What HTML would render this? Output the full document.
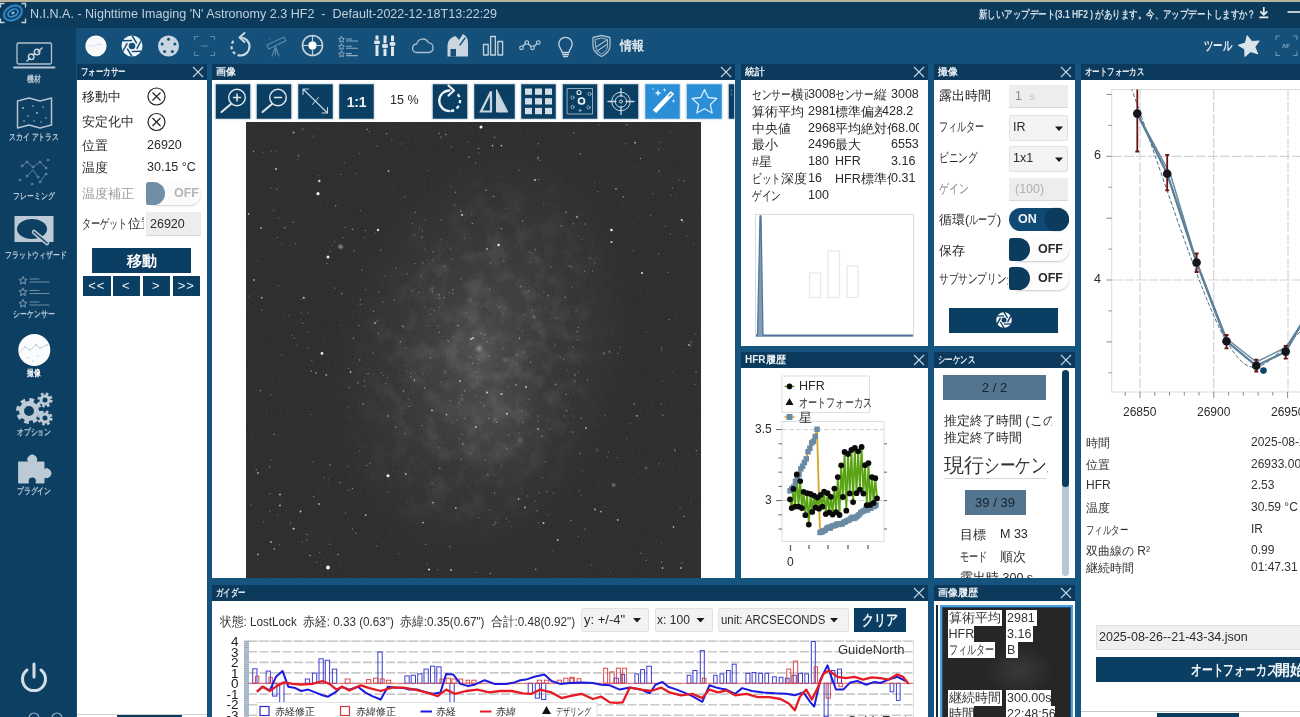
<!DOCTYPE html>
<html lang="ja">
<head>
<meta charset="utf-8">
<title>N.I.N.A.</title>
<style>
*{box-sizing:border-box;margin:0;padding:0}
html,body{width:1300px;height:717px;overflow:hidden}
body{position:relative;background:#15547f;font-family:"Liberation Sans",sans-serif;font-size:12px;color:#222}
#root{position:absolute;left:0;top:0;width:1300px;height:717px;overflow:hidden;filter:blur(0.45px);will-change:transform}
.abs{position:absolute}
#topstrip{left:0;top:0;width:1300px;height:2px;background:#b9b39c}
#titlebar{left:0;top:2px;width:1300px;height:26px;background:#0c3a5b}
#titlebar .t{position:absolute;top:4px;font-size:13px;color:#c4d3de;white-space:nowrap}
#sidebar{left:0;top:28px;width:76px;height:689px;background:#0d3f63}
#tabrow{left:76px;top:28px;width:1224px;height:36px;background:#14507a}
.panel{position:absolute;background:#fff}
.ph{position:absolute;left:0;top:0;right:0;height:16px;background:#0b3a5c;color:#e8eef3;font-weight:bold;font-size:10px;line-height:16px;padding-left:4px;white-space:nowrap;overflow:hidden}
.ph .x{position:absolute;right:3px;top:2px;width:12px;height:12px}
.sb{position:absolute;left:-4px;width:76px;transform:scaleX(.76);text-align:center;color:#b9c9d6;font-size:9px;font-weight:bold;white-space:nowrap}
.lbl{position:absolute;white-space:nowrap;font-size:12.5px;color:#2a2a2a}
.btn{position:absolute;background:#0a3e62}
.tb{position:absolute;top:19px;width:36px;height:36px;background:#0b3c5d}
.tb svg{position:absolute;left:0;top:0}
.nb{top:212px;width:27.500px;height:20px;color:#e8eef3;font-size:13px;line-height:19px;text-align:center;letter-spacing:1px}
.st{position:absolute;left:0;width:178px;height:16px;overflow:hidden;font-size:12.500px;color:#2a2a2a;white-space:nowrap}.st>span{position:absolute;top:0;background:#fff}
.dd{background:#f3f3f3;border:1px solid #e2e2e2;border-radius:2px}.tg{width:60px;height:23px;border-radius:12px;background:#fdfdfd;box-shadow:0 1px 2px rgba(0,0,0,.22)}.kn{width:21px;height:23px;border-radius:3px 12px 12px 3px;background:#0b3c5d}
.ax{top:341px;font-size:12px}.afr{position:absolute;left:5px;width:214px;font-size:12px;color:#333;white-space:nowrap;overflow:hidden;height:15px}.afr b{position:absolute;left:165px;top:0;font-weight:normal}
.k{display:inline-block;transform:scaleX(.7);transform-origin:0 50%;margin-right:calc(var(--n)*-.3em)}
.hl{position:absolute;height:16px;background:#fff;font-size:12.500px;line-height:16px;color:#333;white-space:nowrap;overflow:hidden;padding-left:1px}
.ga{position:absolute;left:0;width:26.500px;text-align:right;font-size:13.500px;line-height:15px;color:#222}.lg{top:119.500px;font-size:10px;color:#222}
</style>
</head>
<body>
<div id="root">
<div id="topstrip" class="abs"></div>
<div id="titlebar" class="abs">
  <span class="t" style="left:30px;transform-origin:0 0;transform:scaleX(.965);color:#bfd0dc">N.I.N.A. - Nighttime Imaging 'N' Astronomy 2.3 HF2&nbsp; -&nbsp; Default-2022-12-18T13:22:29</span>
  <span class="t" style="left:979px;font-size:11px;font-weight:bold;top:5px;color:#d5dfe7;transform-origin:0 0;transform:scaleX(.768)">新しいアップデート(3.1 HF2 ) があります。今、アップデートしますか？</span>
</div>
<svg class="abs" style="left:0;top:2px" width="28" height="24" viewBox="0 0 28 24" fill="none">
<g stroke="#c9d6e0" stroke-width="1.300"><path d="M.5 5.500v-4h4M21.500 1.500h4v4M25.500 16.500v4h-4M4.500 20.500h-4v-4"/></g>
<ellipse cx="13" cy="11" rx="9.500" ry="6.800" transform="rotate(-28 13 11)" stroke="#2f7fc0" stroke-width="2.400"/>
<ellipse cx="13" cy="11" rx="5.300" ry="3.300" transform="rotate(-28 13 11)" stroke="#3b8fd0" stroke-width="1.800"/>
<ellipse cx="13" cy="11" rx="1.800" ry="1.200" transform="rotate(-28 13 11)" fill="#8cc0ea"/>
</svg><div id="sidebar" class="abs"></div>
<svg class="abs" style="left:0;top:0" width="76" height="717" viewBox="0 0 76 717" fill="none" stroke="#b3c3cf" stroke-width="1.3" stroke-linecap="round" stroke-linejoin="round">
  <!-- laptop -->
  <rect x="17" y="43" width="34.5" height="21" rx="1.5"/>
  <path d="M14 67.5H54.5" stroke-width="1.8"/>
  <g stroke="#c9d5de" stroke-width="1.4"><path d="M27 61l3-3M38 52l4-4"/><circle cx="31.2" cy="56.8" r="2.8"/><circle cx="37" cy="52" r="2.8"/><path d="M33 55l2-1.6"/></g>
  <!-- map -->
  <path d="M17.5 101l11.5-3 11 3 11.5-3v27l-11.5 3-11-3-11.5 3z" stroke-width="1.5"/>
  <g fill="#b3c3cf" stroke="none"><circle cx="23" cy="108" r=".9"/><circle cx="28" cy="116" r=".8"/><circle cx="33" cy="106" r=".8"/><circle cx="37" cy="113" r=".9"/><circle cx="43" cy="107" r=".8"/><circle cx="46" cy="118" r=".8"/><circle cx="24" cy="121" r=".8"/><circle cx="34" cy="121" r=".7"/><circle cx="41" cy="122" r=".7"/></g>
  <!-- framing (dim) -->
  <g stroke="#5f7f99" stroke-width="1" fill="#5f7f99"><path d="M22 166l5-4 6 5 7-5 6 6M27 176l6-6 5 7M40 182l6-8" fill="none"/><circle cx="22" cy="166" r="1"/><circle cx="27" cy="162" r="1"/><circle cx="33" cy="167" r="1"/><circle cx="40" cy="162" r="1"/><circle cx="46" cy="168" r="1"/><circle cx="27" cy="176" r="1"/><circle cx="38" cy="177" r="1"/><circle cx="46" cy="174" r="1"/><circle cx="40" cy="182" r="1"/><circle cx="20" cy="180" r=".9"/><circle cx="32" cy="184" r=".9"/><circle cx="48" cy="160" r=".9"/></g>
  <!-- flat wizard -->
  <path d="M14.5 216h39v26h-39z" fill="#bccad5" stroke="none"/>
  <ellipse cx="32" cy="229" rx="15" ry="10" fill="#0d3f63" stroke="none"/>
  <path d="M34 232l13 11" stroke="#bccad5" stroke-width="4.5"/><path d="M34 232l13 11" stroke="#0d3f63" stroke-width="1.6"/>
  <!-- sequencer (dim) -->
  <g stroke="#6f8da4" stroke-width="1.1"><path d="M23 276.5l1.2 2.5 2.6.3-1.9 1.9.5 2.7-2.4-1.3-2.4 1.3.5-2.7-1.9-1.9 2.6-.3z"/><path d="M23 288l1.2 2.5 2.6.3-1.9 1.9.5 2.7-2.4-1.3-2.4 1.3.5-2.7-1.9-1.9 2.6-.3z"/><path d="M23 299.500l1.2 2.500 2.600.300-1.900 1.900.500 2.700-2.400-1.300-2.400 1.300.500-2.700-1.900-1.900 2.600-.300z"/><path d="M30 279h9M30 282h19M30 290.500h9M30 293.500h19M30 302h9M30 305h19" stroke-width="1.2"/></g>
  <!-- imaging (selected) -->
  <circle cx="34.300" cy="350" r="16" fill="#fbfcfd" stroke="none"/>
  <path d="M20 352l5-5 5 3 6-5 4 3 7-3" stroke="#c3cfd9" stroke-width="1"/>
  <g fill="#c3cfd9" stroke="none"><circle cx="25" cy="347" r="1"/><circle cx="30" cy="350" r="1"/><circle cx="36" cy="345" r="1"/><circle cx="40" cy="348" r="1"/><circle cx="47" cy="345" r="1"/><circle cx="28" cy="358" r=".8"/><circle cx="38" cy="356" r=".8"/><circle cx="33" cy="361" r=".8"/></g>
  <!-- gears -->
  <g stroke="#bccad5" fill="none"><circle cx="29" cy="411" r="7.500" stroke-width="5"/><circle cx="29" cy="411" r="11" stroke-width="4" stroke-dasharray="4.600 4.040" stroke-linecap="butt"/><circle cx="45" cy="400" r="4" stroke-width="3"/><circle cx="45" cy="400" r="6.300" stroke-width="2.600" stroke-dasharray="2.600 2.350" stroke-linecap="butt"/><circle cx="45" cy="418" r="4" stroke-width="3"/><circle cx="45" cy="418" r="6.300" stroke-width="2.600" stroke-dasharray="2.600 2.350" stroke-linecap="butt"/></g>
  <!-- puzzle -->
  <path d="M19 462h9.500a4.500 4.500 0 1 1 7.500 0H44v7.500a4.500 4.500 0 1 1 0 7.500V483H36a4.200 4.200 0 1 0-7.500 0H19z" fill="#bccad5" stroke="#bccad5" stroke-width="1"/>
  <!-- power -->
  <path d="M27 670a11.500 11.500 0 1 0 14 0" stroke="#d3dde5" stroke-width="3"/><path d="M34 664v13" stroke="#d3dde5" stroke-width="3"/>
  <circle cx="34" cy="718" r="5" stroke="#9fb3c2" stroke-width="1.200"/><circle cx="57" cy="718" r="5" stroke="#9fb3c2" stroke-width="1.200"/>
</svg>
<div class="sb" style="top:73px">機材</div>
<div class="sb" style="top:131px">スカイ アトラス</div>
<div class="sb" style="top:190px">フレーミング</div>
<div class="sb" style="top:249px">フラットウィザード</div>
<div class="sb" style="top:308px">シーケンサー</div>
<div class="sb" style="top:367px;color:#fff">撮像</div>
<div class="sb" style="top:426px">オプション</div>
<div class="sb" style="top:485px">プラグイン</div>

<div id="tabrow" class="abs"></div>
<svg class="abs" style="left:76px;top:28px" width="1224" height="36" viewBox="76 28 1224 36" fill="none" stroke="#c5d3dd" stroke-width="1.4" stroke-linecap="round" stroke-linejoin="round">
  <!-- imaging -->
  <circle cx="96" cy="46" r="10.600" fill="#f7f9fb" stroke="none"/>
  <path d="M88 47l3-2 3 1.500 4-2.500 4 1" stroke="#cfd8e0" stroke-width=".8"/>
  <!-- aperture -->
  <circle cx="132" cy="46" r="10.500" fill="#f3f6f9" stroke="none"/>
  <g stroke="#14507a" stroke-width="1.500" stroke-linecap="butt"><path d="M132 35.500l4.800 7.800M141.100 40.750l-4.350 8.050M141.100 51.250l-9.150 .250M132 56.500l-4.800-7.800M122.900 51.250l4.350-8.050M122.900 40.750l9.150-.250"/></g>
  <circle cx="132" cy="46" r="3.300" fill="#14507a" stroke="none"/>
  <!-- filter wheel -->
  <circle cx="168.500" cy="46" r="10.500" fill="#c9d6e0" stroke="none"/>
  <g fill="#14507a" stroke="none"><circle cx="168.500" cy="39.300" r="1.500"/><circle cx="174.900" cy="43.900" r="1.500"/><circle cx="172.400" cy="51.400" r="1.500"/><circle cx="164.600" cy="51.400" r="1.500"/><circle cx="162.100" cy="43.900" r="1.500"/></g>
  <!-- focus bracket (dim) -->
  <g stroke="#5c86a5" stroke-width="1.200"><path d="M194.500 40v-3.500h4M210.500 36.500h4v3.500M214.500 52v3.500h-4M198.500 55.500h-4v-3.500M201.500 46h6"/></g>
  <!-- rotator -->
  <path d="M240.500 37.500a9 9 0 0 1 0 18" stroke-width="2.200" stroke="#c9d6e0"/>
  <path d="M240.500 55.500a9 9 0 0 1 -6-15.700" stroke-width="2.200" stroke="#c9d6e0" stroke-dasharray="3 2.600" stroke-linecap="butt"/>
  <path d="M244.500 33l-5 4.500 5 4.500" stroke-width="2" stroke="#c9d6e0"/>
  <!-- telescope (dim) -->
  <g stroke="#5c86a5" stroke-width="1.200"><path d="M267 45l17-8 1.800 3.600-17 8.400zM275.500 47l-3.500 9M275.500 47l3.500 9M275.500 47v8"/><path d="M269 39.500l1.500-1.500" stroke-width="1"/></g>
  <!-- guider target -->
  <circle cx="312.500" cy="45.500" r="10" stroke-width="1.600"/><circle cx="312.500" cy="45.500" r="4.200" fill="#fff" stroke="none"/>
  <path d="M312.500 35.500v5M312.500 50.500v5M302.500 45.500h5M317.500 45.500h5" stroke-width="1.200"/>
  <!-- sequence list -->
  <g stroke="#8fabc0" stroke-width="1"><path d="M341.500 36.500l.9 1.900 2 .2-1.500 1.500.4 2.100-1.800-1-1.800 1 .4-2.100-1.500-1.500 2-.2zM341.500 43.800l.9 1.900 2 .2-1.500 1.500.4 2.100-1.800-1-1.800 1 .4-2.100-1.500-1.500 2-.2zM341.500 51.100l.9 1.900 2 .2-1.500 1.500.4 2.100-1.800-1-1.800 1 .4-2.100-1.500-1.500 2-.2z"/><path d="M346.500 39h5M346.500 41h11M346.500 46.300h5M346.500 48.300h11M346.500 53.600h5M346.500 55.600h11" stroke-width="1.100"/></g>
  <!-- sliders -->
  <g stroke="#dfe7ed" stroke-width="3" stroke-linecap="butt"><path d="M377 35.500v20.500M385 35.500v20.500M392.500 35.500v20.500"/></g>
  <g stroke="#14507a" stroke-width="1" stroke-linecap="butt"><path d="M374 40.200h6M374 44.500h6M382 43.700h6M382 48.300h6M389.500 41.700h6M389.500 46.200h6"/></g>
  <g stroke="#dfe7ed" stroke-width="3.300" stroke-linecap="butt"><path d="M374.200 42.350h5.600M382.200 46h5.600M389.700 43.950h5.600"/></g>
  <!-- cloud -->
  <path d="M416 52.500a4.300 4.300 0 0 1 .8-8.500 6 6 0 0 1 11.400-1.400 5 5 0 0 1 .8 9.900z" stroke-width="1.300" stroke="#a9bfcf"/>
  <!-- dome -->
  <path d="M447.500 56.500v-11a10 10 0 0 1 8-9.500l3.500 4 4-6a10 10 0 0 1 5 9v13.500z" fill="#c9d6e0" stroke="none"/>
  <path d="M450.500 49h5.500v7.500h-5.500z" fill="#14507a" stroke="none"/><path d="M460 45l5-7" stroke="#14507a" stroke-width="1.300"/>
  <!-- bar chart -->
  <path d="M483.500 44.500h4.700v10.500h-4.700zM490.700 36.500h4.700v18.500h-4.700zM497.900 41.500h4.700v13.500h-4.700z" stroke-width="1.300"/>
  <!-- polyline -->
  <path d="M521.500 47.500l5-5 6 5 6-5" stroke-width="1.200"/>
  <g fill="#14507a" stroke-width="1.100"><circle cx="521.500" cy="47.800" r="1.800"/><circle cx="526.800" cy="42.500" r="1.800"/><circle cx="532.500" cy="47.800" r="1.800"/><circle cx="538.300" cy="42.500" r="1.800"/></g>
  <!-- bulb -->
  <path d="M562 52.500c0-3-3.200-4.500-3.200-8.500a6.700 6.700 0 0 1 13.400 0c0 4-3.200 5.500-3.200 8.500zM562.500 54.500h6M563.500 56.500h4" stroke-width="1.300"/>
  <!-- shield -->
  <path d="M593 37.500l8.500-2 8.500 2v8c0 5-3.500 8.500-8.500 11-5-2.500-8.500-6-8.500-11z" stroke-width="1.300" stroke="#a9bfcf"/>
  <path d="M595.500 39.500l6-1.500 6 1.500v6c0 4-2.500 6.500-6 8.500-3.500-2-6-4.500-6-8.500z" stroke-width="1" stroke="#a9bfcf"/>
  <path d="M596 47l11-7M597 51l10-6.500" stroke-width="1.100" stroke="#a9bfcf"/>
  <!-- star -->
  <path d="M1249.500 35.500l3.200 6.600 7.300.9-5.400 5 1.400 7.200-6.500-3.600-6.500 3.600 1.400-7.200-5.400-5 7.300-.9z" fill="#dbe4eb" stroke="#dbe4eb" stroke-width="1" transform="rotate(-12 1249.5 46.5)"/>
  <!-- AF bracket -->
  <g stroke="#6f95b1" stroke-width="1.100"><path d="M1276 39.500v-3.500h3.500M1293.500 36h3.500v3.500M1297 52v3.500h-3.500M1279.500 55.500h-3.500v-3.500"/></g>
</svg>
<div class="abs" style="left:620px;top:38px;font-size:13px;font-weight:bold;color:#e4ebf0;line-height:16px;white-space:nowrap;transform-origin:0 0;transform:scaleX(.93)">情報</div>
<div class="abs" style="left:1204px;top:38px;font-size:13px;font-weight:bold;color:#e4ebf0;line-height:16px;white-space:nowrap;transform-origin:0 0;transform:scaleX(.72)">ツール</div>
<div class="abs" style="left:1282px;top:42px;font-size:6px;font-weight:bold;color:#8fabc0;line-height:8px">AF</div>
<svg class="abs" style="left:1255px;top:2px" width="45" height="24" viewBox="1255 2 45 24" fill="none" stroke="#e6edf2" stroke-width="1.700" stroke-linecap="butt"><path d="M1263.800 7v7M1260.300 11.300l3.500 3.500 3.500-3.500M1259.300 17.300h9"/><path d="M1287.500 12h12.500" stroke-width="1.600"/></svg>


<!-- PANELS -->
<div class="panel" id="p-focuser" style="left:77px;top:64px;width:130px;height:653px"><div class="abs" style="left:0;top:650px;width:130px;height:1px;background:#cfcfcf"></div>
<div class="abs" style="left:40px;top:651px;width:64.500px;height:3px;background:#0b3c5d"></div>
<div class="ph"><span class="k" style="--n:6;transform:scaleX(.74)">フォーカサー</span><svg class="x" viewBox="0 0 12 12" stroke="#c9d6e0" stroke-width="1.100"><path d="M1 1l10 10M11 1L1 11"/></svg></div>
<div class="lbl" style="left:5px;top:25px">移動中</div>
<div class="lbl" style="left:5px;top:50px">安定化中</div>
<svg class="abs" style="left:69px;top:22px" width="22" height="50" viewBox="0 0 22 50" fill="none" stroke="#222" stroke-width="1.200"><circle cx="10.500" cy="10.500" r="8.500"/><path d="M6.500 6.500l8 8M14.500 6.500l-8 8"/><circle cx="10.500" cy="36" r="8.500"/><path d="M6.500 32l8 8M14.500 32l-8 8"/></svg>
<div class="lbl" style="left:5px;top:74px">位置</div><div class="lbl" style="left:70px;top:74px">26920</div>
<div class="lbl" style="left:5px;top:96px">温度</div><div class="lbl" style="left:70px;top:96px">30.15 °C</div>
<div class="lbl" style="left:5px;top:122px;color:#9a9a9a">温度補正</div>
<div class="abs" style="left:69px;top:118px;width:55px;height:23px;border-radius:12px;background:#fbfbfb;box-shadow:0 1px 2px rgba(0,0,0,.18)"></div>
<div class="abs" style="left:69px;top:118px;width:19px;height:23px;border-radius:3px 12px 12px 3px;background:#6f8fa8"></div>
<div class="lbl" style="left:97px;top:122px;color:#b5b5b5;font-weight:bold;font-size:12.500px">OFF</div>
<div class="lbl" style="left:5px;top:152px;width:62px;overflow:hidden"><span class="k" style="--n:5">ターゲット</span>位置</div>
<div class="abs" style="left:69px;top:148px;width:55px;height:24px;background:#ededed;border-bottom:1px solid #d5d5d5"></div>
<div class="lbl" style="left:73px;top:153px">26920</div>
<div class="btn" style="left:15px;top:184px;width:99px;height:25px;color:#fff;font-weight:bold;font-size:15px;text-align:center;line-height:25px">移動</div>
<div class="btn nb" style="left:6px">&lt;&lt;</div><div class="btn nb" style="left:35.500px">&lt;</div><div class="btn nb" style="left:65.500px">&gt;</div><div class="btn nb" style="left:95.500px">&gt;&gt;</div>
</div>
<div class="panel" id="p-image" style="left:212px;top:64px;width:523px;height:514px"><div class="ph">画像<svg class="x" viewBox="0 0 12 12" stroke="#c9d6e0" stroke-width="1.100"><path d="M1 1l10 10M11 1L1 11"/></svg></div>
<svg class="abs" style="left:34px;top:58px" width="455" height="456" viewBox="0 0 455 456">
<defs>
<radialGradient id="g1"><stop offset="0" stop-color="#fff" stop-opacity=".075"/><stop offset=".5" stop-color="#fff" stop-opacity=".045"/><stop offset="1" stop-color="#fff" stop-opacity="0"/></radialGradient>
<radialGradient id="g2"><stop offset="0" stop-color="#fff" stop-opacity=".055"/><stop offset="1" stop-color="#fff" stop-opacity="0"/></radialGradient>
<radialGradient id="gf"><stop offset="0" stop-color="#fff" stop-opacity="1"/><stop offset=".4" stop-color="#fff" stop-opacity=".5"/><stop offset="1" stop-color="#fff" stop-opacity="0"/></radialGradient>
<filter id="nz" x="0" y="0" width="100%" height="100%"><feTurbulence type="fractalNoise" baseFrequency=".9" numOctaves="2" seed="3"/><feColorMatrix values="0 0 0 0 1  0 0 0 0 1  0 0 0 0 1  .5 .5 0 0 -.42"/></filter>
<filter id="b1"><feGaussianBlur stdDeviation=".7"/></filter>
<filter id="cl" x="0" y="0" width="100%" height="100%"><feTurbulence type="fractalNoise" baseFrequency=".05" numOctaves="4" seed="21"/><feColorMatrix values="0 0 0 0 1  0 0 0 0 1  0 0 0 0 1  2.8 0 0 0 -1.15"/></filter>
<radialGradient id="gm1"><stop offset="0" stop-color="#fff"/><stop offset=".55" stop-color="#fff" stop-opacity=".7"/><stop offset="1" stop-color="#fff" stop-opacity="0"/></radialGradient>
<mask id="gm"><ellipse cx="238" cy="236" rx="135" ry="205" fill="url(#gm1)" transform="rotate(16 238 236)"/></mask>
</defs>
<rect width="455" height="456" fill="#2d2d2d"/>
<ellipse cx="236" cy="232" rx="150" ry="215" fill="url(#g1)" transform="rotate(14 236 232)"/>
<ellipse cx="232" cy="226" rx="80" ry="120" fill="url(#g2)" transform="rotate(18 232 226)"/>
<ellipse cx="252" cy="300" rx="60" ry="70" fill="url(#g2)"/>
<ellipse cx="234" cy="228" rx="34" ry="30" fill="url(#g2)"/>
<g mask="url(#gm)"><rect width="455" height="456" filter="url(#cl)" opacity=".1"/></g>
<rect width="455" height="456" filter="url(#nz)" opacity=".15"/>
<g fill="#fff" filter="url(#b1)"><circle cx="148.0" cy="70.0" r="0.55" opacity="0.24"/><circle cx="243.7" cy="166.9" r="0.55" opacity="0.47"/><circle cx="98.8" cy="40.8" r="0.7" opacity="0.24"/><circle cx="42.9" cy="193.5" r="0.8" opacity="0.25"/><circle cx="102.7" cy="285.0" r="0.55" opacity="0.38"/><circle cx="180.9" cy="442.3" r="0.55" opacity="0.38"/><circle cx="62.1" cy="191.0" r="0.8" opacity="0.25"/><circle cx="141.1" cy="370.1" r="0.6" opacity="0.25"/><circle cx="259.6" cy="86.7" r="0.55" opacity="0.37"/><circle cx="30.3" cy="28.9" r="0.6" opacity="0.36"/><circle cx="241.8" cy="352.5" r="0.7" opacity="0.38"/><circle cx="206.4" cy="137.2" r="0.6" opacity="0.42"/><circle cx="112.1" cy="261.1" r="0.8" opacity="0.36"/><circle cx="156.9" cy="204.4" r="0.8" opacity="0.49"/><circle cx="55.2" cy="190.6" r="0.7" opacity="0.26"/><circle cx="222.5" cy="19.7" r="0.55" opacity="0.43"/><circle cx="260.4" cy="396.8" r="0.7" opacity="0.32"/><circle cx="159.9" cy="226.0" r="0.7" opacity="0.24"/><circle cx="44.2" cy="123.7" r="0.55" opacity="0.24"/><circle cx="318.4" cy="293.9" r="0.7" opacity="0.30"/><circle cx="176.0" cy="303.6" r="0.55" opacity="0.48"/><circle cx="162.3" cy="277.5" r="0.7" opacity="0.24"/><circle cx="348.5" cy="60.3" r="0.6" opacity="0.33"/><circle cx="415.5" cy="225.9" r="0.6" opacity="0.35"/><circle cx="249.8" cy="400.4" r="0.7" opacity="0.46"/><circle cx="127.6" cy="189.3" r="0.7" opacity="0.41"/><circle cx="173.6" cy="106.1" r="0.55" opacity="0.27"/><circle cx="106.6" cy="107.2" r="0.7" opacity="0.45"/><circle cx="84.2" cy="129.2" r="0.6" opacity="0.34"/><circle cx="168.5" cy="257.4" r="0.6" opacity="0.41"/><circle cx="234.5" cy="280.5" r="0.55" opacity="0.35"/><circle cx="394.8" cy="431.3" r="0.8" opacity="0.33"/><circle cx="181.9" cy="48.7" r="0.7" opacity="0.24"/><circle cx="32.4" cy="96.2" r="0.6" opacity="0.25"/><circle cx="272.9" cy="48.2" r="0.8" opacity="0.26"/><circle cx="47.8" cy="166.0" r="0.55" opacity="0.24"/><circle cx="95.8" cy="171.7" r="0.7" opacity="0.49"/><circle cx="273.6" cy="215.8" r="0.55" opacity="0.46"/><circle cx="449.9" cy="212.2" r="0.7" opacity="0.31"/><circle cx="67.0" cy="340.1" r="0.7" opacity="0.35"/><circle cx="314.1" cy="234.9" r="0.6" opacity="0.49"/><circle cx="240.2" cy="68.1" r="0.8" opacity="0.48"/><circle cx="343.9" cy="136.4" r="0.55" opacity="0.41"/><circle cx="119.8" cy="167.4" r="0.6" opacity="0.32"/><circle cx="102.5" cy="246.2" r="0.8" opacity="0.31"/><circle cx="102.6" cy="368.0" r="0.6" opacity="0.45"/><circle cx="371.1" cy="335.7" r="0.6" opacity="0.28"/><circle cx="224.2" cy="331.7" r="0.55" opacity="0.44"/><circle cx="215.0" cy="89.3" r="0.8" opacity="0.49"/><circle cx="203.7" cy="424.6" r="0.7" opacity="0.49"/><circle cx="166.5" cy="101.4" r="0.6" opacity="0.35"/><circle cx="154.3" cy="219.7" r="0.8" opacity="0.46"/><circle cx="218.2" cy="296.5" r="0.55" opacity="0.45"/><circle cx="56.1" cy="177.2" r="0.6" opacity="0.35"/><circle cx="82.5" cy="357.9" r="0.7" opacity="0.24"/><circle cx="428.7" cy="327.5" r="0.7" opacity="0.33"/><circle cx="429.0" cy="328.9" r="0.6" opacity="0.50"/><circle cx="14.4" cy="268.5" r="0.7" opacity="0.45"/><circle cx="67.9" cy="374.8" r="0.7" opacity="0.40"/><circle cx="160.0" cy="249.4" r="0.6" opacity="0.23"/><circle cx="362.5" cy="329.6" r="0.55" opacity="0.37"/><circle cx="423.1" cy="197.6" r="0.6" opacity="0.45"/><circle cx="97.2" cy="115.6" r="0.7" opacity="0.36"/><circle cx="346.4" cy="149.0" r="0.8" opacity="0.34"/><circle cx="61.1" cy="412.4" r="0.7" opacity="0.47"/><circle cx="300.8" cy="369.6" r="0.8" opacity="0.34"/><circle cx="415.9" cy="228.2" r="0.8" opacity="0.26"/><circle cx="232.3" cy="395.6" r="0.6" opacity="0.39"/><circle cx="352.0" cy="69.6" r="0.6" opacity="0.35"/><circle cx="329.1" cy="253.0" r="0.7" opacity="0.41"/><circle cx="241.4" cy="219.6" r="0.55" opacity="0.47"/><circle cx="27.6" cy="88.3" r="0.55" opacity="0.44"/><circle cx="231.0" cy="255.3" r="0.55" opacity="0.34"/><circle cx="278.3" cy="230.0" r="0.8" opacity="0.28"/><circle cx="127.0" cy="231.2" r="0.7" opacity="0.36"/><circle cx="113.7" cy="238.0" r="0.7" opacity="0.48"/><circle cx="404.6" cy="93.4" r="0.7" opacity="0.26"/><circle cx="56.9" cy="201.4" r="0.55" opacity="0.41"/><circle cx="195.2" cy="97.9" r="0.7" opacity="0.44"/><circle cx="406.6" cy="71.7" r="0.7" opacity="0.26"/><circle cx="400.2" cy="438.4" r="0.6" opacity="0.43"/><circle cx="44.5" cy="401.1" r="0.6" opacity="0.50"/><circle cx="377.4" cy="74.8" r="0.7" opacity="0.50"/><circle cx="184.1" cy="192.0" r="0.7" opacity="0.31"/><circle cx="327.7" cy="10.8" r="0.8" opacity="0.35"/><circle cx="319.1" cy="175.3" r="0.8" opacity="0.39"/><circle cx="233.0" cy="31.0" r="0.6" opacity="0.49"/><circle cx="49.3" cy="121.8" r="0.55" opacity="0.47"/><circle cx="83.9" cy="342.9" r="0.7" opacity="0.46"/><circle cx="306.9" cy="428.6" r="0.7" opacity="0.26"/><circle cx="416.5" cy="259.3" r="0.7" opacity="0.25"/><circle cx="27.9" cy="312.4" r="0.7" opacity="0.47"/><circle cx="123.3" cy="9.6" r="0.55" opacity="0.44"/><circle cx="39.8" cy="388.2" r="0.55" opacity="0.29"/><circle cx="56.9" cy="7.2" r="0.8" opacity="0.34"/><circle cx="414.9" cy="282.4" r="0.55" opacity="0.37"/><circle cx="109.5" cy="51.4" r="0.6" opacity="0.29"/><circle cx="83.7" cy="422.4" r="0.7" opacity="0.37"/><circle cx="94.8" cy="203.0" r="0.6" opacity="0.30"/><circle cx="364.5" cy="450.5" r="0.55" opacity="0.22"/><circle cx="332.6" cy="250.5" r="0.6" opacity="0.36"/><circle cx="112.8" cy="203.6" r="0.7" opacity="0.40"/><circle cx="248.2" cy="402.8" r="0.8" opacity="0.31"/><circle cx="99.0" cy="105.5" r="0.6" opacity="0.45"/><circle cx="320.7" cy="288.8" r="0.7" opacity="0.50"/><circle cx="444.8" cy="379.5" r="0.55" opacity="0.24"/><circle cx="336.1" cy="117.3" r="0.6" opacity="0.24"/><circle cx="302.0" cy="173.8" r="0.8" opacity="0.41"/><circle cx="129.2" cy="111.2" r="0.7" opacity="0.23"/><circle cx="85.6" cy="123.3" r="0.55" opacity="0.29"/><circle cx="435.8" cy="440.7" r="0.8" opacity="0.31"/><circle cx="17.5" cy="400.0" r="0.6" opacity="0.32"/><circle cx="2.5" cy="174.1" r="0.7" opacity="0.30"/><circle cx="297.9" cy="113.9" r="0.55" opacity="0.25"/><circle cx="370.5" cy="66.9" r="0.8" opacity="0.23"/><circle cx="12.1" cy="139.2" r="0.6" opacity="0.24"/><circle cx="433.9" cy="386.8" r="0.6" opacity="0.40"/><circle cx="324.9" cy="398.5" r="0.7" opacity="0.43"/><circle cx="327.0" cy="224.9" r="0.7" opacity="0.42"/><circle cx="292.1" cy="21.7" r="0.8" opacity="0.40"/><circle cx="333.0" cy="368.3" r="0.6" opacity="0.47"/><circle cx="341.5" cy="258.4" r="0.55" opacity="0.45"/><circle cx="265.4" cy="404.7" r="0.6" opacity="0.24"/><circle cx="20.9" cy="289.3" r="0.55" opacity="0.33"/><circle cx="205.6" cy="24.9" r="0.55" opacity="0.40"/><circle cx="309.0" cy="222.7" r="0.55" opacity="0.35"/><circle cx="33.6" cy="422.6" r="0.8" opacity="0.25"/><circle cx="239.2" cy="338.3" r="0.7" opacity="0.29"/><circle cx="35.6" cy="121.8" r="0.6" opacity="0.28"/><circle cx="295.1" cy="209.6" r="0.7" opacity="0.24"/><circle cx="412.6" cy="131.6" r="0.55" opacity="0.39"/><circle cx="291.9" cy="36.9" r="0.6" opacity="0.31"/><circle cx="295.8" cy="314.5" r="0.8" opacity="0.38"/><circle cx="7.6" cy="29.4" r="0.7" opacity="0.49"/><circle cx="46.9" cy="100.2" r="0.7" opacity="0.30"/><circle cx="235.0" cy="211.6" r="0.7" opacity="0.43"/><circle cx="450.0" cy="249.6" r="0.7" opacity="0.49"/><circle cx="424.3" cy="9.9" r="0.7" opacity="0.24"/><circle cx="230.5" cy="450.6" r="0.7" opacity="0.33"/><circle cx="415.4" cy="421.7" r="0.55" opacity="0.38"/><circle cx="65.9" cy="238.4" r="0.7" opacity="0.26"/><circle cx="371.9" cy="231.4" r="0.55" opacity="0.42"/><circle cx="106.4" cy="406.9" r="0.7" opacity="0.33"/><circle cx="73.7" cy="430.4" r="0.7" opacity="0.33"/><circle cx="330.0" cy="189.7" r="0.7" opacity="0.31"/><circle cx="380.9" cy="2.8" r="0.7" opacity="0.45"/><circle cx="56.1" cy="419.8" r="0.55" opacity="0.47"/><circle cx="132.7" cy="169.9" r="0.7" opacity="0.33"/><circle cx="394.4" cy="36.5" r="0.7" opacity="0.43"/><circle cx="387.3" cy="128.6" r="0.55" opacity="0.45"/><circle cx="130.8" cy="424.0" r="0.6" opacity="0.49"/><circle cx="198.7" cy="144.3" r="0.7" opacity="0.44"/><circle cx="194.9" cy="15.1" r="0.7" opacity="0.48"/><circle cx="426.3" cy="249.7" r="0.55" opacity="0.23"/><circle cx="332.3" cy="205.3" r="0.6" opacity="0.40"/><circle cx="131.1" cy="24.1" r="0.8" opacity="0.26"/><circle cx="215.0" cy="157.0" r="0.7" opacity="0.29"/><circle cx="335.2" cy="296.4" r="0.7" opacity="0.40"/><circle cx="137.7" cy="253.4" r="0.7" opacity="0.25"/><circle cx="292.1" cy="35.9" r="0.8" opacity="0.47"/><circle cx="226.2" cy="101.2" r="0.7" opacity="0.50"/><circle cx="204.9" cy="65.0" r="0.6" opacity="0.29"/><circle cx="80.8" cy="252.7" r="0.7" opacity="0.29"/><circle cx="118.5" cy="258.9" r="0.55" opacity="0.43"/><circle cx="188.2" cy="188.7" r="0.8" opacity="0.28"/><circle cx="123.9" cy="341.2" r="0.7" opacity="0.30"/><circle cx="438.4" cy="58.8" r="0.8" opacity="0.37"/><circle cx="358.4" cy="384.7" r="0.55" opacity="0.30"/><circle cx="114.1" cy="182.3" r="0.7" opacity="0.34"/><circle cx="142.7" cy="369.3" r="0.55" opacity="0.26"/><circle cx="193.8" cy="346.4" r="0.7" opacity="0.49"/><circle cx="222.9" cy="35.0" r="0.8" opacity="0.46"/><circle cx="440.5" cy="114.1" r="0.55" opacity="0.28"/><circle cx="70.6" cy="440.3" r="0.55" opacity="0.48"/><circle cx="327.5" cy="294.0" r="0.7" opacity="0.24"/><circle cx="352.4" cy="2.6" r="0.6" opacity="0.29"/><circle cx="416.9" cy="293.1" r="0.7" opacity="0.49"/><circle cx="284.5" cy="240.2" r="0.7" opacity="0.42"/><circle cx="52.6" cy="33.7" r="0.8" opacity="0.48"/><circle cx="88.5" cy="119.7" r="0.8" opacity="0.22"/><circle cx="244.4" cy="451.4" r="0.7" opacity="0.49"/><circle cx="292.7" cy="400.6" r="0.7" opacity="0.37"/><circle cx="248.7" cy="15.2" r="0.7" opacity="0.42"/><circle cx="140.6" cy="11.8" r="0.7" opacity="0.47"/><circle cx="293.9" cy="38.6" r="0.6" opacity="0.41"/><circle cx="419.2" cy="104.3" r="0.55" opacity="0.41"/><circle cx="326.0" cy="165.4" r="0.7" opacity="0.28"/><circle cx="361.5" cy="335.3" r="0.8" opacity="0.24"/><circle cx="225.6" cy="92.4" r="0.6" opacity="0.28"/><circle cx="101.9" cy="345.0" r="0.7" opacity="0.25"/><circle cx="283.2" cy="277.2" r="0.6" opacity="0.36"/><circle cx="412.6" cy="27.4" r="0.8" opacity="0.26"/><circle cx="179.5" cy="98.0" r="0.8" opacity="0.26"/><circle cx="25.4" cy="29.1" r="0.7" opacity="0.35"/><circle cx="323.1" cy="143.7" r="0.55" opacity="0.50"/><circle cx="422.1" cy="150.5" r="0.6" opacity="0.40"/><circle cx="238.7" cy="212.9" r="0.7" opacity="0.41"/><circle cx="172.8" cy="170.6" r="0.7" opacity="0.34"/><circle cx="51.1" cy="37.3" r="0.55" opacity="0.32"/><circle cx="432.9" cy="57.8" r="0.6" opacity="0.33"/><circle cx="348.7" cy="141.2" r="0.7" opacity="0.24"/><circle cx="320.1" cy="90.3" r="0.8" opacity="0.48"/><circle cx="89.1" cy="166.3" r="0.7" opacity="0.23"/><circle cx="187.3" cy="368.1" r="0.7" opacity="0.23"/><circle cx="17.7" cy="30.2" r="0.55" opacity="0.29"/><circle cx="339.0" cy="407.2" r="0.7" opacity="0.32"/><circle cx="153.1" cy="432.1" r="0.55" opacity="0.29"/><circle cx="325.2" cy="144.7" r="0.7" opacity="0.30"/><circle cx="327.4" cy="270.6" r="0.55" opacity="0.23"/><circle cx="107.5" cy="216.3" r="0.7" opacity="0.49"/><circle cx="176.3" cy="115.2" r="0.7" opacity="0.45"/><circle cx="61.9" cy="225.9" r="0.55" opacity="0.44"/><circle cx="335.1" cy="373.1" r="0.6" opacity="0.39"/><circle cx="149.8" cy="146.1" r="0.7" opacity="0.44"/><circle cx="270.7" cy="232.9" r="0.7" opacity="0.43"/><circle cx="113.5" cy="31.2" r="0.55" opacity="0.35"/><circle cx="247.6" cy="74.5" r="0.7" opacity="0.47"/><circle cx="447.5" cy="121.5" r="0.55" opacity="0.28"/><circle cx="191.9" cy="447.8" r="0.7" opacity="0.27"/><circle cx="62.0" cy="209.9" r="0.6" opacity="0.43"/><circle cx="384.0" cy="301.7" r="0.55" opacity="0.44"/><circle cx="134.6" cy="128.0" r="0.7" opacity="0.32"/><circle cx="334.9" cy="91.8" r="0.6" opacity="0.27"/><circle cx="108.2" cy="128.9" r="0.8" opacity="0.27"/><circle cx="31.2" cy="115.5" r="0.6" opacity="0.36"/><circle cx="106.4" cy="366.6" r="0.7" opacity="0.50"/><circle cx="48.2" cy="216.1" r="0.6" opacity="0.46"/><circle cx="414.4" cy="20.2" r="0.7" opacity="0.29"/><circle cx="24.7" cy="272.8" r="0.8" opacity="0.27"/><circle cx="35.9" cy="233.2" r="0.6" opacity="0.35"/><circle cx="119.2" cy="352.8" r="0.55" opacity="0.25"/><circle cx="270.9" cy="281.6" r="0.6" opacity="0.23"/><circle cx="155.3" cy="21.9" r="0.7" opacity="0.23"/><circle cx="332.2" cy="414.2" r="0.55" opacity="0.45"/><circle cx="186.5" cy="169.7" r="0.8" opacity="0.31"/><circle cx="93.7" cy="360.7" r="0.8" opacity="0.36"/><circle cx="186.1" cy="360.9" r="0.8" opacity="0.26"/><circle cx="242.8" cy="296.5" r="0.7" opacity="0.41"/><circle cx="186.8" cy="129.8" r="0.7" opacity="0.34"/><circle cx="25.2" cy="338.1" r="0.7" opacity="0.34"/><circle cx="10.2" cy="347.8" r="0.7" opacity="0.40"/><circle cx="178.2" cy="184.6" r="0.55" opacity="0.34"/><circle cx="72.6" cy="53.2" r="0.55" opacity="0.33"/><circle cx="400.2" cy="209.9" r="0.6" opacity="0.26"/><circle cx="25.3" cy="66.3" r="0.7" opacity="0.24"/><circle cx="282.6" cy="169.3" r="0.8" opacity="0.27"/><circle cx="158.9" cy="75.0" r="0.6" opacity="0.48"/><circle cx="51.1" cy="223.2" r="0.6" opacity="0.30"/><circle cx="379.6" cy="21.6" r="0.7" opacity="0.31"/><circle cx="276.0" cy="289.0" r="0.55" opacity="0.47"/><circle cx="281.8" cy="373.9" r="0.6" opacity="0.40"/><circle cx="388.3" cy="282.1" r="0.8" opacity="0.46"/><circle cx="376.0" cy="84.5" r="0.6" opacity="0.23"/><circle cx="425.3" cy="72.6" r="0.7" opacity="0.25"/><circle cx="113.4" cy="328.9" r="0.6" opacity="0.23"/><circle cx="255.6" cy="343.6" r="0.55" opacity="0.41"/><circle cx="148.2" cy="177.8" r="0.7" opacity="0.37"/><circle cx="284.8" cy="140.1" r="0.7" opacity="0.31"/><circle cx="114.4" cy="177.5" r="0.7" opacity="0.35"/><circle cx="199.7" cy="12.5" r="0.8" opacity="0.50"/><circle cx="211.8" cy="203.5" r="0.8" opacity="0.44"/><circle cx="208.7" cy="83.0" r="0.7" opacity="0.33"/><circle cx="32.3" cy="163.7" r="0.7" opacity="0.25"/><circle cx="201.3" cy="232.1" r="0.55" opacity="0.23"/><circle cx="60.8" cy="417.9" r="0.7" opacity="0.44"/><circle cx="232.7" cy="26.5" r="0.8" opacity="0.47"/><circle cx="296.4" cy="355.7" r="0.55" opacity="0.46"/><circle cx="451.3" cy="332.2" r="0.55" opacity="0.27"/><circle cx="444.8" cy="223.8" r="0.6" opacity="0.41"/><circle cx="327.2" cy="101.7" r="0.7" opacity="0.39"/><circle cx="115.8" cy="148.1" r="0.8" opacity="0.30"/><circle cx="369.8" cy="66.8" r="0.8" opacity="0.49"/><circle cx="218.5" cy="268.9" r="0.8" opacity="0.36"/><circle cx="145.9" cy="18.6" r="0.6" opacity="0.33"/><circle cx="289.1" cy="127.5" r="0.7" opacity="0.47"/><circle cx="78.1" cy="356.0" r="0.55" opacity="0.44"/><circle cx="23.9" cy="389.1" r="0.7" opacity="0.38"/><circle cx="263.6" cy="400.0" r="0.55" opacity="0.29"/><circle cx="243.6" cy="388.3" r="0.7" opacity="0.29"/><circle cx="448.7" cy="262.4" r="0.7" opacity="0.31"/><circle cx="38.7" cy="105.8" r="0.8" opacity="0.43"/><circle cx="23.8" cy="371.7" r="0.7" opacity="0.31"/><circle cx="437.6" cy="394.5" r="0.7" opacity="0.43"/><circle cx="339.0" cy="102.0" r="0.7" opacity="0.39"/><circle cx="196.9" cy="233.2" r="0.55" opacity="0.26"/><circle cx="104.5" cy="296.6" r="0.55" opacity="0.24"/><circle cx="257.8" cy="139.0" r="0.8" opacity="0.32"/><circle cx="103.1" cy="265.2" r="0.8" opacity="0.26"/><circle cx="167.2" cy="375.6" r="0.6" opacity="0.26"/><circle cx="424.4" cy="111.9" r="0.6" opacity="0.35"/><circle cx="30.7" cy="67.3" r="0.7" opacity="0.33"/><circle cx="121.2" cy="7.2" r="0.8" opacity="0.47"/><circle cx="270.2" cy="262.9" r="0.8" opacity="0.48"/><circle cx="332.8" cy="114.1" r="0.55" opacity="0.23"/><circle cx="241.7" cy="185.1" r="0.6" opacity="0.26"/><circle cx="413.2" cy="49.3" r="0.8" opacity="0.37"/><circle cx="426.4" cy="66.2" r="0.6" opacity="0.37"/><circle cx="291.9" cy="294.1" r="0.7" opacity="0.45"/><circle cx="80.8" cy="141.5" r="0.7" opacity="0.40"/><circle cx="450.3" cy="328.7" r="0.7" opacity="0.42"/><circle cx="4.9" cy="382.8" r="0.7" opacity="0.24"/><circle cx="297.6" cy="81.1" r="0.55" opacity="0.29"/><circle cx="292.5" cy="57.6" r="0.7" opacity="0.42"/><circle cx="122.0" cy="251.8" r="0.7" opacity="0.41"/><circle cx="415.7" cy="440.3" r="0.7" opacity="0.40"/><circle cx="437.3" cy="99.9" r="0.8" opacity="0.22"/><circle cx="119.4" cy="108.5" r="0.6" opacity="0.48"/><circle cx="338.5" cy="149.4" r="0.7" opacity="0.31"/><circle cx="109.9" cy="411.3" r="0.8" opacity="0.35"/><circle cx="380.7" cy="316.6" r="0.55" opacity="0.34"/><circle cx="328.8" cy="259.2" r="0.7" opacity="0.44"/><circle cx="178.6" cy="266.0" r="0.8" opacity="0.48"/><circle cx="67.2" cy="14.1" r="0.55" opacity="0.39"/><circle cx="75.0" cy="442.8" r="0.55" opacity="0.23"/><circle cx="64.4" cy="292.2" r="0.55" opacity="0.42"/><circle cx="334.3" cy="31.7" r="0.8" opacity="0.43"/><circle cx="91.9" cy="432.5" r="0.8" opacity="0.47"/><circle cx="31.7" cy="393.4" r="0.7" opacity="0.25"/><circle cx="94.8" cy="52.5" r="0.55" opacity="0.49"/><circle cx="412.9" cy="341.9" r="0.55" opacity="0.45"/><circle cx="286.8" cy="131.6" r="0.55" opacity="0.26"/><circle cx="359.2" cy="293.5" r="0.7" opacity="0.31"/><circle cx="193.1" cy="11.4" r="0.7" opacity="0.48"/><circle cx="23.8" cy="344.7" r="0.7" opacity="0.44"/><circle cx="273.5" cy="216.7" r="0.7" opacity="0.39"/><circle cx="16.0" cy="188.2" r="0.7" opacity="0.37"/><circle cx="46.3" cy="213.5" r="0.55" opacity="0.37"/><circle cx="99.7" cy="390.9" r="0.55" opacity="0.38"/><circle cx="131.5" cy="198.7" r="0.8" opacity="0.28"/><circle cx="345.7" cy="443.0" r="0.55" opacity="0.32"/><circle cx="303.9" cy="307.1" r="0.6" opacity="0.41"/><circle cx="118.6" cy="115.8" r="0.8" opacity="0.26"/><circle cx="276.2" cy="209.0" r="0.6" opacity="0.41"/><circle cx="237.8" cy="283.8" r="0.8" opacity="0.37"/><circle cx="65.3" cy="248.9" r="0.8" opacity="0.37"/><circle cx="198.2" cy="175.6" r="0.7" opacity="0.40"/><circle cx="304.7" cy="144.7" r="0.7" opacity="0.40"/><circle cx="270.9" cy="242.1" r="0.7" opacity="0.29"/><circle cx="201.6" cy="218.5" r="0.8" opacity="0.25"/><circle cx="168.3" cy="258.5" r="0.8" opacity="0.37"/><circle cx="203.1" cy="170.4" r="0.7" opacity="0.31"/><circle cx="274.6" cy="164.4" r="0.8" opacity="0.36"/><circle cx="262.6" cy="312.9" r="0.7" opacity="0.33"/><circle cx="277.0" cy="300.4" r="0.8" opacity="0.25"/><circle cx="250.7" cy="300.2" r="0.8" opacity="0.38"/><circle cx="168.7" cy="141.4" r="0.6" opacity="0.36"/><circle cx="193.4" cy="185.6" r="0.6" opacity="0.27"/><circle cx="289.7" cy="447.4" r="0.8" opacity="0.42"/><circle cx="275.2" cy="340.0" r="0.6" opacity="0.28"/><circle cx="331.4" cy="217.7" r="0.8" opacity="0.27"/><circle cx="230.1" cy="273.4" r="0.6" opacity="0.26"/><circle cx="280.1" cy="170.3" r="0.6" opacity="0.29"/><circle cx="255.5" cy="106.6" r="0.8" opacity="0.42"/><circle cx="230.7" cy="250.2" r="0.7" opacity="0.33"/><circle cx="159.3" cy="311.7" r="0.7" opacity="0.35"/><circle cx="166.3" cy="168.9" r="0.6" opacity="0.35"/><circle cx="169.2" cy="90.5" r="0.8" opacity="0.35"/><circle cx="283.8" cy="130.4" r="0.8" opacity="0.23"/><circle cx="195.1" cy="260.1" r="0.8" opacity="0.22"/><circle cx="150.0" cy="304.9" r="0.8" opacity="0.36"/><circle cx="293.3" cy="370.7" r="0.7" opacity="0.30"/><circle cx="193.2" cy="172.7" r="0.8" opacity="0.35"/><circle cx="315.4" cy="103.9" r="0.7" opacity="0.37"/><circle cx="185.2" cy="296.5" r="0.6" opacity="0.21"/><circle cx="202.6" cy="219.5" r="0.6" opacity="0.31"/><circle cx="291.9" cy="298.9" r="0.8" opacity="0.25"/><circle cx="224.2" cy="235.3" r="0.7" opacity="0.31"/><circle cx="120.9" cy="343.4" r="0.6" opacity="0.42"/><circle cx="260.7" cy="326.4" r="0.6" opacity="0.36"/><circle cx="174.9" cy="153.5" r="0.7" opacity="0.26"/><circle cx="226.7" cy="241.2" r="0.7" opacity="0.40"/><circle cx="177.0" cy="140.9" r="0.8" opacity="0.26"/><circle cx="248.5" cy="371.0" r="0.8" opacity="0.41"/><circle cx="373.9" cy="225.2" r="0.7" opacity="0.25"/><circle cx="299.5" cy="339.8" r="0.8" opacity="0.24"/><circle cx="178.9" cy="127.2" r="0.6" opacity="0.28"/><circle cx="168.6" cy="112.7" r="0.7" opacity="0.30"/><circle cx="214.9" cy="336.0" r="0.6" opacity="0.37"/><circle cx="139.5" cy="261.4" r="0.6" opacity="0.26"/><circle cx="204.0" cy="278.6" r="0.7" opacity="0.35"/><circle cx="135.1" cy="250.8" r="0.7" opacity="0.28"/><circle cx="206.7" cy="171.4" r="0.7" opacity="0.29"/><circle cx="181.5" cy="138.3" r="0.7" opacity="0.23"/><circle cx="216.2" cy="312.2" r="0.6" opacity="0.38"/><circle cx="313.9" cy="150.0" r="0.6" opacity="0.32"/><circle cx="193.1" cy="325.9" r="0.8" opacity="0.20"/><circle cx="310.7" cy="195.9" r="0.7" opacity="0.33"/><circle cx="138.9" cy="154.0" r="0.6" opacity="0.37"/><circle cx="216.0" cy="273.2" r="0.7" opacity="0.37"/><circle cx="291.1" cy="388.7" r="0.8" opacity="0.41"/><circle cx="333.9" cy="331.5" r="0.8" opacity="0.37"/><circle cx="253.3" cy="185.2" r="0.8" opacity="0.25"/><circle cx="326.6" cy="310.1" r="0.8" opacity="0.39"/><circle cx="193.4" cy="210.4" r="0.6" opacity="0.38"/><circle cx="164.8" cy="251.2" r="0.7" opacity="0.30"/><circle cx="273.4" cy="310.9" r="0.7" opacity="0.24"/><circle cx="161.4" cy="151.9" r="0.6" opacity="0.38"/><circle cx="164.7" cy="254.9" r="0.8" opacity="0.27"/><circle cx="177.4" cy="252.1" r="0.8" opacity="0.22"/><circle cx="183.0" cy="141.3" r="0.6" opacity="0.20"/><circle cx="320.1" cy="272.5" r="0.7" opacity="0.38"/><circle cx="286.6" cy="287.5" r="0.6" opacity="0.21"/><circle cx="218.7" cy="116.3" r="0.7" opacity="0.22"/><circle cx="206.8" cy="167.7" r="0.8" opacity="0.32"/><circle cx="272.3" cy="196.6" r="0.7" opacity="0.29"/><circle cx="136.9" cy="180.0" r="0.7" opacity="0.28"/><circle cx="184.5" cy="236.0" r="0.7" opacity="0.39"/><circle cx="213.2" cy="280.5" r="0.7" opacity="0.37"/><circle cx="210.6" cy="297.9" r="0.7" opacity="0.23"/><circle cx="257.2" cy="226.8" r="0.6" opacity="0.29"/><circle cx="181.1" cy="204.0" r="0.8" opacity="0.21"/><circle cx="232.1" cy="242.0" r="0.6" opacity="0.38"/><circle cx="141.4" cy="255.6" r="0.6" opacity="0.37"/><circle cx="297.8" cy="170.2" r="0.8" opacity="0.23"/><circle cx="195.2" cy="117.7" r="0.8" opacity="0.22"/><circle cx="309.6" cy="262.6" r="0.8" opacity="0.37"/><circle cx="262.0" cy="265.0" r="0.6" opacity="0.29"/><circle cx="336.5" cy="349.0" r="0.6" opacity="0.28"/><circle cx="276.6" cy="98.9" r="0.8" opacity="0.36"/><circle cx="256.8" cy="191.7" r="0.6" opacity="0.27"/><circle cx="162.6" cy="284.4" r="0.6" opacity="0.31"/><circle cx="132.3" cy="211.0" r="0.7" opacity="0.33"/><circle cx="286.2" cy="187.8" r="0.6" opacity="0.35"/><circle cx="89.7" cy="83.8" r="0.8" opacity="0.42"/><circle cx="178.0" cy="246.5" r="0.6" opacity="0.22"/><circle cx="118.8" cy="264.4" r="0.8" opacity="0.20"/><circle cx="317.4" cy="236.9" r="0.6" opacity="0.42"/><circle cx="258.3" cy="186.7" r="0.6" opacity="0.23"/><circle cx="321.1" cy="248.1" r="0.6" opacity="0.30"/><circle cx="229.5" cy="40.7" r="0.7" opacity="0.37"/><circle cx="209.4" cy="70.2" r="0.8" opacity="0.37"/><circle cx="215.2" cy="337.6" r="0.7" opacity="0.30"/><circle cx="272.4" cy="206.2" r="0.6" opacity="0.36"/><circle cx="243.5" cy="234.0" r="0.8" opacity="0.35"/><circle cx="193.8" cy="175.9" r="0.7" opacity="0.36"/><circle cx="289.0" cy="378.9" r="0.7" opacity="0.33"/><circle cx="179.8" cy="422.5" r="0.8" opacity="0.30"/><circle cx="220.4" cy="190.4" r="0.6" opacity="0.28"/><circle cx="186.4" cy="138.4" r="0.7" opacity="0.30"/><circle cx="244.6" cy="141.1" r="0.7" opacity="0.37"/><circle cx="192.2" cy="204.2" r="0.6" opacity="0.34"/><circle cx="176.3" cy="108.7" r="0.8" opacity="0.27"/><circle cx="114.8" cy="88.6" r="0.6" opacity="0.33"/><circle cx="213.1" cy="316.9" r="0.6" opacity="0.28"/><circle cx="204.3" cy="127.2" r="0.6" opacity="0.38"/><circle cx="233.3" cy="237.8" r="0.7" opacity="0.26"/><circle cx="302.1" cy="392.8" r="0.6" opacity="0.26"/><circle cx="307.4" cy="371.3" r="0.8" opacity="0.23"/><circle cx="331.1" cy="209.6" r="0.8" opacity="0.35"/><circle cx="277.5" cy="192.5" r="0.6" opacity="0.32"/></g>
<g fill="#fff" filter="url(#b1)"><circle cx="235.0" cy="5.0" r="1.5" opacity="0.95"/><circle cx="72.0" cy="71.7" r="1.6" opacity="0.95"/><circle cx="73.3" cy="59.0" r="1.2" opacity="0.80"/><circle cx="82.0" cy="135.0" r="1.5" opacity="0.90"/><circle cx="132.0" cy="108.0" r="1.2" opacity="0.85"/><circle cx="252.6" cy="123.0" r="1.3" opacity="0.90"/><circle cx="216.0" cy="93.0" r="1.1" opacity="0.70"/><circle cx="365.5" cy="108.0" r="1.3" opacity="0.90"/><circle cx="365.5" cy="120.0" r="1.1" opacity="0.75"/><circle cx="396.0" cy="151.0" r="1.1" opacity="0.80"/><circle cx="435.7" cy="98.0" r="1.1" opacity="0.80"/><circle cx="289.0" cy="58.0" r="1" opacity="0.70"/><circle cx="30.0" cy="47.0" r="1" opacity="0.70"/><circle cx="142.5" cy="49.0" r="0.9" opacity="0.60"/><circle cx="246.5" cy="23.6" r="0.9" opacity="0.65"/><circle cx="255.5" cy="23.6" r="0.9" opacity="0.65"/><circle cx="389.0" cy="20.7" r="0.9" opacity="0.65"/><circle cx="47.6" cy="10.5" r="0.9" opacity="0.60"/><circle cx="2.7" cy="92.0" r="0.9" opacity="0.60"/><circle cx="15.0" cy="106.0" r="0.9" opacity="0.60"/><circle cx="57.8" cy="175.7" r="1" opacity="0.70"/><circle cx="15.8" cy="175.7" r="0.9" opacity="0.60"/><circle cx="8.0" cy="158.0" r="0.9" opacity="0.60"/><circle cx="241.0" cy="127.0" r="0.9" opacity="0.60"/><circle cx="331.0" cy="95.0" r="0.9" opacity="0.60"/><circle cx="129.0" cy="201.0" r="0.9" opacity="0.60"/><circle cx="225.0" cy="217.0" r="1" opacity="0.70"/><circle cx="76.0" cy="231.4" r="1.4" opacity="0.90"/><circle cx="227.0" cy="216.0" r="1" opacity="0.70"/><circle cx="104.6" cy="250.0" r="0.9" opacity="0.65"/><circle cx="80.0" cy="253.0" r="0.8" opacity="0.60"/><circle cx="70.0" cy="251.0" r="0.8" opacity="0.60"/><circle cx="142.0" cy="353.7" r="1.5" opacity="0.95"/><circle cx="159.7" cy="352.0" r="0.9" opacity="0.60"/><circle cx="82.0" cy="445.5" r="1.9" opacity="1.00"/><circle cx="183.0" cy="447.5" r="1.1" opacity="0.80"/><circle cx="205.0" cy="448.0" r="0.9" opacity="0.65"/><circle cx="47.6" cy="406.7" r="1" opacity="0.75"/><circle cx="54.5" cy="389.6" r="1" opacity="0.70"/><circle cx="34.0" cy="372.5" r="0.9" opacity="0.65"/><circle cx="34.0" cy="383.5" r="0.9" opacity="0.65"/><circle cx="73.0" cy="382.0" r="0.9" opacity="0.60"/><circle cx="119.7" cy="393.0" r="0.9" opacity="0.60"/><circle cx="177.0" cy="400.6" r="0.9" opacity="0.65"/><circle cx="187.0" cy="380.6" r="0.9" opacity="0.60"/><circle cx="209.8" cy="386.0" r="0.9" opacity="0.60"/><circle cx="272.6" cy="377.0" r="0.9" opacity="0.60"/><circle cx="279.0" cy="385.5" r="0.9" opacity="0.60"/><circle cx="297.5" cy="401.0" r="1" opacity="0.70"/><circle cx="311.7" cy="418.0" r="0.9" opacity="0.65"/><circle cx="443.0" cy="223.0" r="0.9" opacity="0.60"/><circle cx="349.0" cy="387.5" r="0.9" opacity="0.60"/><circle cx="355.0" cy="389.6" r="0.9" opacity="0.60"/><circle cx="371.7" cy="398.0" r="0.9" opacity="0.60"/><circle cx="427.5" cy="405.0" r="0.9" opacity="0.60"/><circle cx="416.5" cy="446.0" r="0.9" opacity="0.60"/><circle cx="435.0" cy="446.0" r="0.9" opacity="0.60"/><circle cx="241.0" cy="270.6" r="1" opacity="0.75"/><circle cx="255.5" cy="272.0" r="1" opacity="0.70"/><circle cx="280.0" cy="265.0" r="1" opacity="0.70"/><circle cx="261.0" cy="291.8" r="1" opacity="0.70"/><circle cx="214.0" cy="259.0" r="0.9" opacity="0.65"/><circle cx="186.0" cy="288.5" r="0.9" opacity="0.65"/><circle cx="200.5" cy="292.6" r="0.9" opacity="0.60"/><circle cx="229.8" cy="305.0" r="0.9" opacity="0.65"/><circle cx="216.7" cy="322.0" r="0.8" opacity="0.60"/><circle cx="292.0" cy="307.0" r="0.9" opacity="0.60"/><circle cx="340.0" cy="306.0" r="0.9" opacity="0.60"/><circle cx="391.0" cy="293.8" r="0.9" opacity="0.60"/><circle cx="12.0" cy="351.0" r="0.9" opacity="0.60"/><circle cx="12.0" cy="432.4" r="0.9" opacity="0.60"/><circle cx="25.0" cy="420.0" r="0.9" opacity="0.60"/><circle cx="28.4" cy="427.0" r="0.8" opacity="0.60"/><circle cx="64.0" cy="433.6" r="0.8" opacity="0.55"/><circle cx="157.6" cy="269.0" r="0.8" opacity="0.55"/><circle cx="117.0" cy="282.0" r="0.8" opacity="0.55"/><circle cx="142.0" cy="294.0" r="0.8" opacity="0.55"/></g>
<g><circle cx="94.5" cy="124.7" r="3.6" fill="url(#gf)" opacity="0.55"/><circle cx="233.0" cy="226.5" r="4.5" fill="url(#gf)" opacity="0.35"/><circle cx="288.0" cy="195.0" r="2.6" fill="url(#gf)" opacity="0.30"/><circle cx="367.6" cy="363.0" r="3.0" fill="url(#gf)" opacity="0.40"/><circle cx="358.0" cy="231.4" r="2.2" fill="url(#gf)" opacity="0.30"/><circle cx="363.5" cy="229.8" r="2.0" fill="url(#gf)" opacity="0.30"/><circle cx="400.0" cy="346.0" r="2.4" fill="url(#gf)" opacity="0.25"/><circle cx="351.0" cy="328.0" r="2.4" fill="url(#gf)" opacity="0.20"/><circle cx="445.0" cy="220.0" r="2.5" fill="url(#gf)" opacity="0.20"/><circle cx="186.0" cy="167.0" r="3.0" fill="url(#gf)" opacity="0.18"/><circle cx="199.0" cy="250.0" r="3.0" fill="url(#gf)" opacity="0.18"/><circle cx="216.0" cy="277.0" r="3.5" fill="url(#gf)" opacity="0.16"/><circle cx="274.0" cy="318.0" r="3.5" fill="url(#gf)" opacity="0.16"/><circle cx="259.0" cy="238.0" r="4.0" fill="url(#gf)" opacity="0.16"/><circle cx="224.0" cy="178.0" r="4.0" fill="url(#gf)" opacity="0.14"/><circle cx="249.0" cy="298.0" r="4.0" fill="url(#gf)" opacity="0.15"/></g>
</svg>
<svg class="abs" style="left:0;top:16px" width="523" height="42" viewBox="212 80 523 42" fill="none" stroke="#e3eaf0" stroke-width="1.500" stroke-linecap="round" stroke-linejoin="round">
<rect x="215" y="83.500" width="36" height="36" rx="1" fill="#0a3e62"/><rect x="256" y="83.500" width="36" height="36" rx="1" fill="#0a3e62"/><rect x="297.5" y="83.500" width="36" height="36" rx="1" fill="#0a3e62"/><rect x="338.5" y="83.500" width="36" height="36" rx="1" fill="#0a3e62"/><rect x="432" y="83.500" width="36" height="36" rx="1" fill="#0a3e62"/><rect x="473.5" y="83.500" width="42" height="36" rx="1" fill="#0a3e62"/><rect x="520.5" y="83.500" width="36" height="36" rx="1" fill="#0a3e62"/><rect x="562" y="83.500" width="36" height="36" rx="1" fill="#0a3e62"/><rect x="603" y="83.500" width="36" height="36" rx="1" fill="#0a3e62"/><rect x="644.5" y="83.500" width="36" height="36" rx="1" fill="#2b8fd8"/><rect x="686" y="83.500" width="36.5" height="36" rx="1" fill="#2b8fd8"/><rect x="728" y="83.500" width="7" height="36" rx="1" fill="#0a3e62"/>
<!-- zoom in -->
<circle cx="237" cy="97.500" r="8.300" stroke-width="1.400"/><path d="M231 104l-9.500 8" stroke-width="2"/><path d="M233.500 97.500h7M237 94v7" stroke-width="1.500"/>
<!-- zoom out -->
<circle cx="278" cy="97.500" r="8.300" stroke-width="1.400"/><path d="M272 104l-9.500 8" stroke-width="2"/><path d="M274.500 97.500h7" stroke-width="1.500"/>
<!-- fit -->
<g stroke="#c9d6e0" stroke-width="1.100"><path d="M303 89l24.500 24M303 89h5.500M303 89v5.500M327.500 113h-5.500M327.500 113v-5.500"/><path d="M312.500 104.500l6-7" stroke-width="1"/></g>
<!-- rotate -->
<path d="M449.500 90.500a10.300 10.300 0 1 0 .1 20.600" stroke-width="2.300" stroke="#eef2f5"/>
<path d="M451 111a10.300 10.300 0 0 0 5.500-18" stroke-width="2.300" stroke="#eef2f5" stroke-dasharray="3.300 2.800" stroke-linecap="butt"/>
<path d="M448.500 85.500l5.500 5-5.500 5" stroke-width="2.200" stroke="#eef2f5"/>
<!-- flip -->
<path d="M491 91.500v20h-10z" stroke="#c9d6e0" stroke-width="2.200" stroke-linejoin="miter"/><path d="M496.500 90v22h11z" fill="#c9d6e0" stroke="#c9d6e0" stroke-width="1"/>
<!-- grid -->
<g fill="#d3dde5" stroke="none"><rect x="525" y="88.500" width="7" height="6.300"/><rect x="535" y="88.500" width="7" height="6.300"/><rect x="545" y="88.500" width="7" height="6.300"/><rect x="525" y="98.200" width="7" height="6.300"/><rect x="535" y="98.200" width="7" height="6.300"/><rect x="545" y="98.200" width="7" height="6.300"/><rect x="525" y="107.900" width="7" height="6.300"/><rect x="535" y="107.900" width="7" height="6.300"/><rect x="545" y="107.900" width="7" height="6.300"/></g>
<!-- star detect -->
<g stroke="#9fb6c8" stroke-width=".9"><rect x="567.500" y="88.500" width="25" height="25.500"/><circle cx="579" cy="92.500" r="2" stroke="#dfe7ed" stroke-width="1.200"/><circle cx="572.500" cy="97.500" r="1.600"/><circle cx="581.500" cy="101" r="3" stroke="#f2f5f8" stroke-width="1.700"/><circle cx="589.500" cy="94" r="1.600"/><circle cx="572.500" cy="107" r="1.600"/><circle cx="588.500" cy="107.500" r="1.600"/><circle cx="580" cy="110.500" r="1"/></g>
<!-- crosshair -->
<g stroke="#c9d6e0" stroke-width="1"><circle cx="621" cy="101.500" r="9.300"/><circle cx="621" cy="101.500" r="5.800"/><circle cx="621" cy="101.500" r="1.500"/><path d="M621 88.500v8M621 106.500v8M608 101.500h8M626 101.500h8" stroke-width="1.300"/></g>
<!-- wand -->
<path d="M654.500 111.500l18-19" stroke="#fff" stroke-width="4.600" stroke-linecap="butt"/><path d="M669 96l2-2" stroke="#2b8fd8" stroke-width="1.200"/>
<g fill="#e8f2fa" stroke="none"><path d="M658 89.500l.9 2.600 2.600.9-2.600.9-.9 2.600-.9-2.600-2.600-.900 2.600-.900z"/><path d="M664.500 88l.5 1.500 1.500.5-1.500.5-.5 1.500-.5-1.500-1.500-.5 1.500-.5z"/><path d="M673.500 99l.5 1.500 1.500.5-1.500.5-.5 1.500-.5-1.500-1.500-.5 1.500-.5z"/><circle cx="653" cy="89" r=".7"/></g>
<!-- star -->
<path d="M704.500 89.500l3.700 8 8.600 1-6.400 5.900 1.700 8.600-7.600-4.300-7.600 4.300 1.700-8.600-6.400-5.900 8.600-1z" stroke="#d7eaf8" stroke-width="1.300"/>
<path d="M731.500 90v1M731.500 94v1" stroke="#5f86a3" stroke-width="1"/>
</svg>
<div class="abs" style="left:126.500px;top:19.500px;width:36px;height:35.500px;color:#eef2f5;font-weight:bold;font-size:14px;line-height:36px;text-align:center;letter-spacing:-.3px">1:1</div>
<div class="lbl" style="left:178px;top:29px;font-size:12.500px;color:#2a2a2a">15 %</div></div>
<div class="panel" id="p-stats" style="left:741px;top:64px;width:187px;height:282px">
<div class="st" style="top:23.00px"><span style="left:11px"><span class="k" style="--n:4;transform:scaleX(0.74);margin-right:-1.04em">センサー</span>横画</span><span style="left:94px"><span class="k" style="--n:4;transform:scaleX(0.74);margin-right:-1.04em">センサー</span>縦</span><span style="left:67px">3008</span><span style="left:150px">3008</span></div>
<div class="st" style="top:39.75px"><span style="left:11px">算術平均</span><span style="left:94px">標準偏差S</span><span style="left:67px">2981</span><span style="left:141px">428.2</span></div>
<div class="st" style="top:56.50px"><span style="left:11px">中央値</span><span style="left:94px">平均絶対偏</span><span style="left:67px">2968</span><span style="left:150px">68.00</span></div>
<div class="st" style="top:73.25px"><span style="left:11px">最小</span><span style="left:94px">最大</span><span style="left:67px">2496</span><span style="left:150px">6553</span></div>
<div class="st" style="top:90.00px"><span style="left:11px">#星</span><span style="left:94px">HFR</span><span style="left:67px">180</span><span style="left:150px">3.16</span></div>
<div class="st" style="top:106.75px"><span style="left:11px"><span class="k" style="--n:3;transform:scaleX(0.74);margin-right:-0.78em">ビット</span>深度</span><span style="left:94px">HFR標準偏</span><span style="left:67px">16</span><span style="left:150px">0.31</span></div>
<div class="st" style="top:123.50px"><span style="left:11px"><span class="k" style="--n:3;transform:scaleX(0.74);margin-right:-0.78em">ゲイン</span></span><span style="left:67px">100</span></div>
<svg class="abs" style="left:13.500px;top:150px" width="160" height="124" viewBox="0 0 160 124" fill="none">
<rect x=".5" y=".5" width="158" height="122" stroke="#d4dbe1" stroke-width="1"/>
<path d="M1 121.500h157" stroke="#52779a" stroke-width="2"/>
<path d="M2.500 122L5 2.500c.2-1 .8-1 1 0L8 122" stroke="#52779a" stroke-width="1.300" fill="#7f9db5"/>
<g stroke="#e3eaef" stroke-width="1.300"><rect x="54.500" y="59" width="11" height="24.500"/><rect x="73" y="37" width="11.500" height="46.500"/><rect x="92" y="52" width="11" height="31.500"/></g>
</svg>
<div class="ph">統計<svg class="x" viewBox="0 0 12 12" stroke="#c9d6e0" stroke-width="1.100"><path d="M1 1l10 10M11 1L1 11"/></svg></div></div>
<div class="panel" id="p-imaging" style="left:934px;top:64px;width:141px;height:282px">
<div class="lbl" style="left:5px;top:24px;color:#222">露出時間</div>
<div class="abs" style="left:75px;top:21px;width:59px;height:23px;background:#ededed;border-bottom:1px solid #d9d9d9"></div>
<div class="lbl" style="left:81px;top:25px;color:#8a8a8a">1 <span style="color:#c4c4c4;font-size:11px;margin-left:4px">s</span></div>
<div class="lbl" style="left:5px;top:55px"><span class="k" style="--n:5;transform:scaleX(0.7);margin-right:-1.50em">フィルター</span></div>
<div class="abs dd" style="left:75px;top:51px;width:59px;height:26px"></div>
<div class="lbl" style="left:79px;top:56px">IR</div>
<div class="lbl" style="left:5px;top:86px"><span class="k" style="--n:4;transform:scaleX(0.74);margin-right:-1.04em">ビニング</span></div>
<div class="abs dd" style="left:75px;top:82px;width:59px;height:26px"></div>
<div class="lbl" style="left:79px;top:87px">1x1</div>
<div class="lbl" style="left:5px;top:117px;color:#8a8a8a"><span class="k" style="--n:3;transform:scaleX(0.76);margin-right:-0.72em">ゲイン</span></div>
<div class="abs" style="left:75px;top:114px;width:59px;height:23px;background:#ededed;border-bottom:1px solid #d9d9d9"></div>
<div class="lbl" style="left:81px;top:118px;color:#b0b0b0;font-size:12.500px">(100)</div>
<div class="lbl" style="left:5px;top:148px">循環(<span class="k" style="--n:3;transform:scaleX(0.7);margin-right:-0.90em">ループ</span>)</div>
<div class="abs" style="left:75px;top:144px;width:60px;height:23px;border-radius:12px 12px 12px 12px;background:#0f4a75"></div>
<div class="abs" style="left:112px;top:144px;width:23px;height:23px;border-radius:12px;background:#0b3c5d;box-shadow:-1px 0 2px rgba(0,0,0,.35)"></div>
<div class="lbl" style="left:84px;top:148px;color:#f0f4f7;font-weight:bold;font-size:12.500px">ON</div>
<div class="lbl" style="left:5px;top:179px">保存</div>
<div class="abs tg" style="left:75px;top:174px"></div><div class="abs kn" style="left:75px;top:174px"></div>
<div class="lbl" style="left:104px;top:178px;color:#2a2a2a;font-weight:bold;font-size:12.500px">OFF</div>
<div class="lbl" style="left:5px;top:207px;width:69px;overflow:hidden"><span class="k" style="--n:8;transform:scaleX(0.74);margin-right:-2.08em">サブサンプリング</span></div>
<div class="abs tg" style="left:75px;top:203px"></div><div class="abs kn" style="left:75px;top:203px"></div>
<div class="lbl" style="left:104px;top:207px;color:#2a2a2a;font-weight:bold;font-size:12.500px">OFF</div>
<div class="btn" style="left:15px;top:243.500px;width:109px;height:25px"></div>
<svg class="abs" style="left:61px;top:247px" width="18" height="18" viewBox="-9 -9 18 18"><circle r="7.800" fill="#f3f6f9"/><g stroke="#0b3c5d" stroke-width="1.300"><path d="M0-7.800l3.600 5.800M6.750-3.900l-3.250 6M6.750 3.900l-6.800 .2M0 7.800l-3.600-5.800M-6.750 3.900l3.250-6M-6.750-3.900l6.800-.2"/></g><circle r="2.500" fill="#0b3c5d"/></svg>
<svg class="abs" style="left:120px;top:61px" width="12" height="40" viewBox="0 0 12 40" fill="#1a1a1a"><path d="M1 1.500h8l-4 4.500zM1 32.500h8l-4 4.500z"/></svg>
<div class="ph">撮像<svg class="x" viewBox="0 0 12 12" stroke="#c9d6e0" stroke-width="1.100"><path d="M1 1l10 10M11 1L1 11"/></svg></div></div>
<div class="panel" id="p-af" style="left:1081px;top:64px;width:219px;height:653px">
<svg class="abs" style="left:0;top:16px" width="219" height="350" viewBox="0 16 219 350" fill="none">
<rect x="30.700" y="25.500" width="200" height="302.500" stroke="#dcdcdc" stroke-width="1"/>
<g stroke="#d4d4d4" stroke-width="1.200" stroke-dasharray="10 2"><path d="M59 26v302M132.700 26v302M207 26v302M31 92.300h190M31 216h190"/></g>
<g stroke="#8a8a8a" stroke-width="1"><path d="M25.5 30.4h5.2"/><path d="M27.5 61.4h3.2"/><path d="M25.5 92.3h5.2"/><path d="M27.5 123.2h3.2"/><path d="M25.5 154.2h5.2"/><path d="M27.5 185.1h3.2"/><path d="M25.5 216.0h5.2"/><path d="M27.5 246.9h3.2"/><path d="M25.5 277.9h5.2"/><path d="M27.5 308.8h3.2"/><path d="M44.2 328v3.5"/><path d="M59.0 328v6"/><path d="M73.8 328v3.5"/><path d="M88.5 328v3.5"/><path d="M103.3 328v3.5"/><path d="M118.0 328v3.5"/><path d="M132.8 328v6"/><path d="M147.6 328v3.5"/><path d="M162.3 328v3.5"/><path d="M177.1 328v3.5"/><path d="M191.8 328v3.5"/><path d="M206.6 328v6"/><path d="M221.4 328v3.5"/></g>

<path d="M56.300 49.600L89.500 110.500 116 199 145.500 274.500 175.300 298 204.700 283.500 219 262" stroke="#6989a0" stroke-width="1.500" stroke-linejoin="round"/>
<clipPath id="afc"><rect x="31" y="25.500" width="200" height="302.500"/></clipPath><g clip-path="url(#afc)"><path d="M48 18C75 90 120 235 145.500 277.200S180 306 219 268" stroke="#4d6f87" stroke-width="1" stroke-dasharray="4 2"/>
<path d="M56.3 49.6L86.2 109.8L115.6 198.5L145.5 277.2L175.3 301.8L204.7 287.6L234.0 236.0" stroke="#5d8098" stroke-width="2.300" stroke-linejoin="round"/>
<g stroke="#671313" stroke-width="1.800"><path d="M56.3 24.0V87.5M54.3 24.0h4M54.3 87.5h4"/><path d="M86.2 90.8V126.4M84.2 90.8h4M84.2 126.4h4"/><path d="M115.6 189.5V208.0M113.6 189.5h4M113.6 208.0h4"/><path d="M145.5 271.0V284.3M143.5 271.0h4M143.5 284.3h4"/><path d="M175.3 295.7V307.5M173.3 295.7h4M173.3 307.5h4"/><path d="M204.7 282.0V294.7M202.7 282.0h4M202.7 294.7h4"/><path d="M234.0 228.0V244.0M232.0 228.0h4M232.0 244.0h4"/></g>
<g fill="#15151c"><circle cx="56.3" cy="49.6" r="4.300"/><circle cx="86.2" cy="109.8" r="4.300"/><circle cx="115.6" cy="198.5" r="4.300"/><circle cx="145.5" cy="277.2" r="4.300"/><circle cx="175.3" cy="301.8" r="4.300"/><circle cx="204.7" cy="287.6" r="4.300"/><circle cx="234.0" cy="236.0" r="4.300"/></g>
<circle cx="182.500" cy="306.600" r="3.300" fill="#0f456d"/></g>
</svg>
<div class="lbl" style="left:13px;top:84px;font-size:12.500px">6</div><div class="lbl" style="left:13px;top:208px;font-size:12.500px">4</div>
<div class="lbl ax" style="left:42px">26850</div><div class="lbl ax" style="left:116px">26900</div><div class="lbl ax" style="left:190px">26950</div>
<div class="afr" style="top:371px">時間<b>2025-08-26</b></div>
<div class="afr" style="top:393px">位置<b>26933.00</b></div>
<div class="afr" style="top:414px">HFR<b>2.53</b></div>
<div class="afr" style="top:436px">温度<b>30.59 °C</b></div>
<div class="afr" style="top:458px"><span class="k" style="--n:5">フィルター</span><b>IR</b></div>
<div class="afr" style="top:479px">双曲線の R²<b>0.99</b></div>
<div class="afr" style="top:496px">継続時間<b>01:47.31</b></div>
<div class="abs" style="left:15px;top:561px;width:204px;height:25px;background:#efefef;border:1px solid #e1e1e1;border-right:0"></div>
<div class="lbl" style="left:18px;top:566px;font-size:12.500px">2025-08-26--21-43-34.json</div>
<div class="btn" style="left:15px;top:592.500px;width:204px;height:25.500px;color:#f2f5f8;font-weight:bold;font-size:15px;line-height:25px;padding-left:95px;white-space:nowrap;overflow:hidden"><span class="k" style="--n:8;transform:scaleX(.72)">オートフォーカス</span>開始</div>
<div class="abs" style="left:0;top:647px;width:219px;height:1px;background:#c8c8c8"></div>
<div class="abs" style="left:76px;top:649px;width:82px;height:4px;background:#0b3c5d"></div>
<div class="ph"><span class="k" style="--n:8;transform:scaleX(.74)">オートフォーカス</span></div></div>
<div class="panel" id="p-hfr" style="left:741px;top:352px;width:187px;height:226px">
<svg class="abs" style="left:0;top:16px" width="187" height="210" viewBox="0 16 187 210" fill="none">
<rect x="41" y="24" width="87.500" height="36.500" stroke="#dedede" fill="#fff"/>
<rect x="41" y="69.500" width="102" height="120" stroke="#dedede"/>
<g stroke="#d0d0d0" stroke-dasharray="5 2"><path d="M41 77.600h102M41 148.600h102"/></g>
<g stroke="#666" stroke-width="1"><path d="M35 77.600h6M35 148.600h6M37.500 91.800h3.500M37.500 106h3.500M37.500 120.200h3.500M37.500 134.400h3.500M37.500 162.800h3.500M37.500 177h3.500M143 91.800h3M143 120.200h3M143 148.600h3M143 177h3"/><path d="M49.500 193v6M68 193v4M87 193v4M107 193v4M127 193v4" stroke-width="1.300"/></g>
<path d="M49.0 138.8L50.8 136.6L52.6 134.8L54.4 129.4L56.2 125.9L58.0 122.4L59.8 116.8L61.6 114.1L63.4 110.4L65.2 106.8L67.0 99.7L68.8 96.2L70.6 90.9L72.4 89.3L74.2 84.4L76.0 77.2L79.0 180.4L80.7 180.1L82.4 178.8L84.1 178.2L85.8 176.2L87.5 175.2L89.2 176.1L90.9 174.1L92.6 173.8L94.3 173.2L96.0 171.9L97.7 172.4L99.4 171.6L101.1 172.0L102.8 170.2L104.5 169.7L106.2 168.5L107.8 168.1L109.5 166.6L111.2 165.2L112.9 166.4L114.6 165.5L116.3 164.1L118.0 162.7L119.7 160.6L121.4 159.4L123.1 158.6L124.8 156.9L126.5 158.0L128.2 155.9L129.9 156.2L131.6 153.8L133.3 154.4L135.0 153.0" stroke="#d9a326" stroke-width="1.800"/>
<path d="M49.0 147.3L50.7 156.1L52.4 136.9L54.1 154.6L55.8 122.5L57.5 154.6L59.2 129.1L60.9 156.1L62.6 139.8L64.4 163.2L66.1 141.2L67.8 172.6L69.5 142.0L71.2 159.9L72.9 143.6L74.6 155.5L76.3 145.5L78.0 156.7L79.7 143.0L81.4 154.7L83.1 139.7L84.8 162.1L86.5 141.2L88.2 160.3L89.9 144.8L91.6 162.6L93.4 136.6L95.1 160.1L96.8 125.1L98.5 163.0L100.2 113.3L101.9 145.0L103.6 99.9L105.3 158.7L107.0 102.0L108.7 141.4L110.4 97.9L112.1 150.1L113.8 96.0L115.5 141.2L117.2 99.3L118.9 137.7L120.6 94.9L122.4 141.6L124.1 113.2L125.8 153.2L127.5 111.1L129.2 152.9L130.9 125.1L132.6 150.9L134.3 126.2L136.0 146.4" stroke="#5aa314" stroke-width="1.800" stroke-linejoin="round"/>
<g fill="#6b8ba4"><rect x="46.3" y="136.1" width="5.500" height="5.500"/><rect x="48.1" y="133.9" width="5.500" height="5.500"/><rect x="49.9" y="132.1" width="5.500" height="5.500"/><rect x="51.7" y="126.7" width="5.500" height="5.500"/><rect x="53.5" y="123.2" width="5.500" height="5.500"/><rect x="55.3" y="119.7" width="5.500" height="5.500"/><rect x="57.1" y="114.1" width="5.500" height="5.500"/><rect x="58.9" y="111.4" width="5.500" height="5.500"/><rect x="60.7" y="107.7" width="5.500" height="5.500"/><rect x="62.5" y="104.1" width="5.500" height="5.500"/><rect x="64.3" y="97.0" width="5.500" height="5.500"/><rect x="66.1" y="93.5" width="5.500" height="5.500"/><rect x="67.9" y="88.2" width="5.500" height="5.500"/><rect x="69.7" y="86.6" width="5.500" height="5.500"/><rect x="71.5" y="81.7" width="5.500" height="5.500"/><rect x="73.3" y="74.5" width="5.500" height="5.500"/><rect x="76.3" y="177.7" width="5.500" height="5.500"/><rect x="78.0" y="177.4" width="5.500" height="5.500"/><rect x="79.7" y="176.1" width="5.500" height="5.500"/><rect x="81.4" y="175.5" width="5.500" height="5.500"/><rect x="83.1" y="173.5" width="5.500" height="5.500"/><rect x="84.8" y="172.5" width="5.500" height="5.500"/><rect x="86.5" y="173.4" width="5.500" height="5.500"/><rect x="88.2" y="171.4" width="5.500" height="5.500"/><rect x="89.9" y="171.1" width="5.500" height="5.500"/><rect x="91.6" y="170.5" width="5.500" height="5.500"/><rect x="93.3" y="169.2" width="5.500" height="5.500"/><rect x="95.0" y="169.7" width="5.500" height="5.500"/><rect x="96.7" y="168.9" width="5.500" height="5.500"/><rect x="98.4" y="169.3" width="5.500" height="5.500"/><rect x="100.1" y="167.5" width="5.500" height="5.500"/><rect x="101.8" y="167.0" width="5.500" height="5.500"/><rect x="103.5" y="165.8" width="5.500" height="5.500"/><rect x="105.1" y="165.4" width="5.500" height="5.500"/><rect x="106.8" y="163.9" width="5.500" height="5.500"/><rect x="108.5" y="162.5" width="5.500" height="5.500"/><rect x="110.2" y="163.7" width="5.500" height="5.500"/><rect x="111.9" y="162.8" width="5.500" height="5.500"/><rect x="113.6" y="161.4" width="5.500" height="5.500"/><rect x="115.3" y="160.0" width="5.500" height="5.500"/><rect x="117.0" y="157.9" width="5.500" height="5.500"/><rect x="118.7" y="156.7" width="5.500" height="5.500"/><rect x="120.4" y="155.9" width="5.500" height="5.500"/><rect x="122.1" y="154.2" width="5.500" height="5.500"/><rect x="123.8" y="155.3" width="5.500" height="5.500"/><rect x="125.5" y="153.2" width="5.500" height="5.500"/><rect x="127.2" y="153.5" width="5.500" height="5.500"/><rect x="128.9" y="151.1" width="5.500" height="5.500"/><rect x="130.6" y="151.7" width="5.500" height="5.500"/><rect x="132.3" y="150.3" width="5.500" height="5.500"/></g>
<g fill="#0a0a0a"><circle cx="49.0" cy="147.3" r="2.900"/><circle cx="50.7" cy="156.1" r="2.900"/><circle cx="52.4" cy="136.9" r="2.900"/><circle cx="54.1" cy="154.6" r="2.900"/><circle cx="55.8" cy="122.5" r="2.900"/><circle cx="57.5" cy="154.6" r="2.900"/><circle cx="59.2" cy="129.1" r="2.900"/><circle cx="60.9" cy="156.1" r="2.900"/><circle cx="62.6" cy="139.8" r="2.900"/><circle cx="64.4" cy="163.2" r="2.900"/><circle cx="66.1" cy="141.2" r="2.900"/><circle cx="67.8" cy="172.6" r="2.900"/><circle cx="69.5" cy="142.0" r="2.900"/><circle cx="71.2" cy="159.9" r="2.900"/><circle cx="72.9" cy="143.6" r="2.900"/><circle cx="74.6" cy="155.5" r="2.900"/><circle cx="76.3" cy="145.5" r="2.900"/><circle cx="78.0" cy="156.7" r="2.900"/><circle cx="79.7" cy="143.0" r="2.900"/><circle cx="81.4" cy="154.7" r="2.900"/><circle cx="83.1" cy="139.7" r="2.900"/><circle cx="84.8" cy="162.1" r="2.900"/><circle cx="86.5" cy="141.2" r="2.900"/><circle cx="88.2" cy="160.3" r="2.900"/><circle cx="89.9" cy="144.8" r="2.900"/><circle cx="91.6" cy="162.6" r="2.900"/><circle cx="93.4" cy="136.6" r="2.900"/><circle cx="95.1" cy="160.1" r="2.900"/><circle cx="96.8" cy="125.1" r="2.900"/><circle cx="98.5" cy="163.0" r="2.900"/><circle cx="100.2" cy="113.3" r="2.900"/><circle cx="101.9" cy="145.0" r="2.900"/><circle cx="103.6" cy="99.9" r="2.900"/><circle cx="105.3" cy="158.7" r="2.900"/><circle cx="107.0" cy="102.0" r="2.900"/><circle cx="108.7" cy="141.4" r="2.900"/><circle cx="110.4" cy="97.9" r="2.900"/><circle cx="112.1" cy="150.1" r="2.900"/><circle cx="113.8" cy="96.0" r="2.900"/><circle cx="115.5" cy="141.2" r="2.900"/><circle cx="117.2" cy="99.3" r="2.900"/><circle cx="118.9" cy="137.7" r="2.900"/><circle cx="120.6" cy="94.9" r="2.900"/><circle cx="122.4" cy="141.6" r="2.900"/><circle cx="124.1" cy="113.2" r="2.900"/><circle cx="125.8" cy="153.2" r="2.900"/><circle cx="127.5" cy="111.1" r="2.900"/><circle cx="129.2" cy="152.9" r="2.900"/><circle cx="130.9" cy="125.1" r="2.900"/><circle cx="132.6" cy="150.9" r="2.900"/><circle cx="134.3" cy="126.2" r="2.900"/><circle cx="136.0" cy="146.4" r="2.900"/></g>
<path d="M43.500 34.400h10" stroke="#5aa314" stroke-width="1.500"/><circle cx="48.500" cy="34.400" r="2.800" fill="#0a0a0a"/>
<path d="M48.500 46l4 7h-8z" fill="#111"/>
<path d="M43.500 65h10" stroke="#d9a326" stroke-width="1.500"/><rect x="45.500" y="62" width="6" height="6" fill="#6b8ba4"/>
</svg>
<div class="lbl" style="left:58px;top:27px;font-size:12.500px">HFR</div>
<div class="lbl" style="left:58px;top:42.500px;font-size:12.500px"><span class="k" style="--n:8">オートフォーカス</span></div>
<div class="lbl" style="left:58px;top:58px;font-size:12.500px">星</div>
<div class="lbl" style="left:14px;top:70px;font-size:12px">3.5</div><div class="lbl" style="left:24px;top:141px;font-size:12px">3</div>
<div class="lbl" style="left:46px;top:203px;font-size:12px">0</div>
<div class="ph">HFR履歴<svg class="x" viewBox="0 0 12 12" stroke="#c9d6e0" stroke-width="1.100"><path d="M1 1l10 10M11 1L1 11"/></svg></div></div>
<div class="panel" id="p-seq" style="left:934px;top:352px;width:141px;height:226px">
<div class="abs" style="left:9px;top:22.500px;width:103px;height:25.500px;background:#54758f;color:#15222d;font-size:13px;text-align:center;line-height:25px">2 / 2</div>
<div class="lbl" style="left:10px;top:61px;font-size:12.500px;width:108px;overflow:hidden">推定終了時間 (この目標)</div>
<div class="lbl" style="left:10px;top:77.500px;font-size:12.500px">推定終了時間</div>
<div class="lbl" style="left:10px;top:100px;font-size:20px;color:#333;width:104px;overflow:hidden;line-height:26px">現行<span class="k" style="--n:5;transform:scaleX(.78);margin-right:-1.1em">シーケンス</span></div>
<div class="abs" style="left:10px;top:125.500px;width:102px;height:1px;background:#d8d8d8"></div>
<div class="abs" style="left:30.500px;top:137.500px;width:61px;height:25.500px;background:#54758f;color:#15222d;font-size:13px;text-align:center;line-height:25px">39 / 39</div>
<div class="lbl" style="left:26px;top:175px;font-size:12.500px">目標</div><div class="lbl" style="left:66px;top:175px;font-size:12.500px">M 33</div>
<div class="lbl" style="left:26px;top:197px;font-size:12.500px"><span class="k" style="--n:3">モード</span></div><div class="lbl" style="left:66px;top:197px;font-size:12.500px">順次</div>
<div class="lbl" style="left:26px;top:218px;font-size:12.500px;height:8px;overflow:hidden">露出時 300 s</div>
<div class="abs" style="left:127.500px;top:18px;width:7.500px;height:206px;border-radius:4px;background:#b9c8d4"></div>
<div class="abs" style="left:127.500px;top:18px;width:7.500px;height:117px;border-radius:4px;background:#0b3c5d"></div>
<div class="ph"><span class="k" style="--n:5;transform:scaleX(.74)">シーケンス</span><svg class="x" viewBox="0 0 12 12" stroke="#c9d6e0" stroke-width="1.100"><path d="M1 1l10 10M11 1L1 11"/></svg></div></div>
<div class="panel" id="p-guider" style="left:212px;top:585px;width:716px;height:132px">
<div class="lbl" style="left:8px;top:28px;font-size:13px;color:#333;transform-origin:0 0;transform:scaleX(.9)">状態: LostLock&nbsp; 赤経: 0.33 (0.63")&nbsp; 赤緯:0.35(0.67")&nbsp; 合計:0.48(0.92")</div>
<div class="abs dd" style="left:369px;top:22.500px;width:68px;height:24.500px"></div><div class="lbl" style="left:372px;top:27px;font-size:13px">y: +/-4"</div>
<div class="abs dd" style="left:443px;top:22.500px;width:57.500px;height:24.500px"></div><div class="lbl" style="left:445px;top:27px;font-size:13px;transform-origin:0 0;transform:scaleX(.93)">x: 100</div>
<div class="abs dd" style="left:506px;top:22.500px;width:130.500px;height:24.500px"></div><div class="lbl" style="left:509px;top:27px;font-size:13px;transform-origin:0 0;transform:scaleX(.875)">unit: ARCSECONDS</div>
<div class="btn" style="left:642px;top:22.500px;width:52px;height:24.500px;color:#f2f5f8;font-weight:bold;font-size:15px;line-height:24px;text-align:center"><span class="k" style="--n:3;transform:scaleX(.8);margin-right:-.6em">クリア</span></div>
<svg class="abs" style="left:421px;top:32px" width="210" height="8" viewBox="0 0 210 8" fill="#1a1a1a"><path d="M0 1h8l-4 4.500zM63.500 1h8l-4 4.500zM197 1h8l-4 4.500z"/></svg>
<svg class="abs" style="left:0;top:50px" width="716" height="82" viewBox="0 50 716 82" fill="none">
<rect x="34.500" y="56" width="667" height="80" stroke="#dcdcdc"/>
<g stroke="#c9c9c9" stroke-width="1.600" stroke-dasharray="9 2.500"><path d="M36 56.2H701"/><path d="M36 66.8H701"/><path d="M36 77.4H701"/><path d="M36 87.9H701"/><path d="M36 98.5H701"/><path d="M36 109.1H701"/><path d="M36 119.7H701"/><path d="M36 130.3H701"/></g>
<path d="M34.500 56v80" stroke="#b9c8d4" stroke-width="5"/><g stroke="#8ea5b7" stroke-width=".8"><path d="M32 56.2h5"/><path d="M32 58.3h5"/><path d="M32 60.4h5"/><path d="M32 62.5h5"/><path d="M32 64.7h5"/><path d="M32 66.8h5"/><path d="M32 68.9h5"/><path d="M32 71.0h5"/><path d="M32 73.1h5"/><path d="M32 75.2h5"/><path d="M32 77.4h5"/><path d="M32 79.5h5"/><path d="M32 81.6h5"/><path d="M32 83.7h5"/><path d="M32 85.8h5"/><path d="M32 87.9h5"/><path d="M32 90.1h5"/><path d="M32 92.2h5"/><path d="M32 94.3h5"/><path d="M32 96.4h5"/><path d="M32 98.5h5"/><path d="M32 100.6h5"/><path d="M32 102.8h5"/><path d="M32 104.9h5"/><path d="M32 107.0h5"/><path d="M32 109.1h5"/><path d="M32 111.2h5"/><path d="M32 113.3h5"/><path d="M32 115.4h5"/><path d="M32 117.6h5"/><path d="M32 119.7h5"/><path d="M32 121.8h5"/><path d="M32 123.9h5"/><path d="M32 126.0h5"/><path d="M32 128.1h5"/><path d="M32 130.3h5"/><path d="M32 132.4h5"/><path d="M32 134.5h5"/></g>
<g stroke="#2a2ad0" stroke-width="1" opacity=".9"><rect x="40.7" y="83.8" width="4.3" height="14.5"/><rect x="54.1" y="86.1" width="4.3" height="12.2"/><rect x="60.6" y="98.3" width="4.3" height="12.8"/><rect x="67.7" y="98.3" width="4.3" height="21.9"/><rect x="93.3" y="94.0" width="4.3" height="4.3"/><rect x="100.4" y="88.1" width="4.3" height="10.2"/><rect x="107.0" y="73.8" width="4.3" height="24.5"/><rect x="113.3" y="75.3" width="4.3" height="23.1"/><rect x="120.4" y="84.1" width="4.3" height="14.2"/><rect x="165.9" y="67.0" width="4.3" height="31.3"/><rect x="192.9" y="90.9" width="4.3" height="7.4"/><rect x="199.2" y="90.3" width="4.3" height="8.0"/><rect x="205.7" y="88.9" width="4.3" height="9.4"/><rect x="212.0" y="84.1" width="4.3" height="14.2"/><rect x="218.5" y="81.2" width="4.3" height="17.1"/><rect x="224.8" y="81.8" width="4.3" height="16.5"/><rect x="237.9" y="98.3" width="4.3" height="21.9"/><rect x="316.2" y="98.3" width="4.3" height="10.5"/><rect x="323.3" y="98.3" width="4.3" height="14.8"/><rect x="329.5" y="98.3" width="4.3" height="16.2"/><rect x="402.1" y="93.2" width="4.3" height="5.1"/><rect x="409.2" y="89.5" width="3.4" height="8.8"/><rect x="422.9" y="88.9" width="3.7" height="9.4"/><rect x="428.6" y="84.6" width="4.0" height="13.7"/><rect x="434.8" y="81.2" width="4.6" height="17.1"/><rect x="475.2" y="90.3" width="3.7" height="8.0"/><rect x="480.9" y="85.5" width="4.0" height="12.8"/><rect x="488.3" y="65.6" width="4.0" height="32.7"/><rect x="501.7" y="90.3" width="3.4" height="8.0"/><rect x="508.0" y="88.9" width="3.7" height="9.4"/><rect x="514.5" y="85.5" width="3.7" height="12.8"/><rect x="520.2" y="79.2" width="4.0" height="19.1"/><rect x="533.9" y="88.3" width="4.0" height="10.0"/><rect x="540.1" y="87.5" width="3.7" height="10.8"/><rect x="546.7" y="88.3" width="3.7" height="10.0"/><rect x="552.9" y="88.3" width="3.7" height="10.0"/><rect x="560.6" y="91.8" width="3.7" height="6.5"/><rect x="567.2" y="92.3" width="3.7" height="6.0"/><rect x="573.4" y="93.2" width="3.7" height="5.1"/><rect x="580.0" y="90.3" width="4.3" height="8.0"/><rect x="586.5" y="88.3" width="4.0" height="10.0"/><rect x="592.8" y="88.9" width="3.7" height="9.4"/><rect x="599.3" y="56.5" width="4.0" height="41.8"/><rect x="612.1" y="98.3" width="4.0" height="33.3"/><rect x="619.2" y="85.5" width="3.7" height="12.8"/><rect x="625.5" y="84.1" width="4.0" height="14.2"/><rect x="678.1" y="98.3" width="3.7" height="8.5"/><rect x="684.4" y="98.3" width="3.7" height="17.1"/></g>
<g stroke="#d43a3a" stroke-width="1" opacity=".9"><rect x="43.5" y="91.2" width="3.4" height="7.1"/><rect x="56.9" y="92.3" width="3.4" height="6.0"/><rect x="133.2" y="94.0" width="4.8" height="4.3"/><rect x="154.5" y="94.6" width="4.3" height="3.7"/><rect x="161.6" y="93.2" width="4.3" height="5.1"/><rect x="168.2" y="94.0" width="4.0" height="4.3"/><rect x="174.4" y="95.2" width="4.3" height="3.1"/><rect x="227.9" y="94.0" width="3.4" height="4.3"/><rect x="234.2" y="93.2" width="4.3" height="5.1"/><rect x="239.9" y="94.0" width="4.3" height="4.3"/><rect x="247.0" y="94.0" width="3.7" height="4.3"/><rect x="254.1" y="95.2" width="3.4" height="3.1"/><rect x="259.8" y="95.2" width="4.3" height="3.1"/><rect x="325.3" y="95.2" width="4.3" height="3.1"/><rect x="332.4" y="95.2" width="4.3" height="3.1"/><rect x="345.2" y="95.2" width="4.3" height="3.1"/><rect x="351.7" y="93.2" width="4.3" height="5.1"/><rect x="358.0" y="92.3" width="4.3" height="6.0"/><rect x="358.0" y="93.2" width="3.4" height="5.1"/><rect x="365.1" y="93.7" width="3.7" height="4.6"/><rect x="391.6" y="83.2" width="4.0" height="15.1"/><rect x="397.8" y="86.9" width="4.3" height="11.4"/><rect x="404.4" y="83.2" width="4.0" height="15.1"/><rect x="410.6" y="83.2" width="4.0" height="15.1"/><rect x="490.3" y="93.2" width="3.7" height="5.1"/><rect x="574.8" y="84.1" width="4.0" height="14.2"/><rect x="581.4" y="76.1" width="4.3" height="22.2"/><rect x="602.2" y="81.8" width="3.4" height="16.5"/><rect x="614.1" y="98.3" width="4.3" height="14.8"/><rect x="626.9" y="98.3" width="3.7" height="3.4"/></g>
<path d="M36 98.300H701" stroke="#e05555" stroke-width=".8"/>
<path d="M45.0 106.8L50.6 101.7L57.8 105.4L64.0 91.8L70.6 86.1L76.3 101.7L83.4 103.1L89.1 106.0L96.2 104.6L103.3 107.4L110.4 110.3L116.1 111.7L123.2 107.4L129.5 101.7L137.4 104.6L146.0 101.7L153.1 107.4L160.2 111.1L168.7 114.5L175.9 101.7L183.0 102.6L191.5 103.1L197.2 104.6L205.7 104.6L214.3 107.4L221.4 108.8L228.5 107.4L234.2 88.9L241.3 89.5L248.4 98.9L255.5 100.9L262.7 99.7L272.6 95.2L282.6 98.9L294.0 98.9L302.5 97.4L308.2 95.2L313.9 94.6L322.4 91.8L332.4 89.5L339.5 96.0L348.0 98.9L358.0 98.0L369.4 97.4L380.8 98.0L389.3 99.7L397.8 100.3L407.8 104.6L417.8 102.6L429.1 104.6L437.7 108.3L443.4 99.7L450.5 96.9L456.2 101.7L464.7 104.6L471.8 107.4L480.4 111.1L490.3 116.8L497.4 100.3L506.0 103.1L514.5 104.6L523.1 108.8L530.2 103.1L540.1 106.0L551.5 107.4L562.9 108.3L574.3 108.8L582.8 110.3L591.4 107.4L598.5 117.4L602.2 121.6L608.4 94.6L615.5 80.4L619.8 93.2L624.1 104.6L631.2 104.6L638.3 97.4L645.4 96.0L654.0 99.7L662.5 96.9L668.2 98.0L676.7 94.6L685.3 91.8L693.8 96.0" stroke="#1a1ae0" stroke-width="2" stroke-linejoin="round"/>
<path d="M45.0 106.6L50.6 101.7L57.8 106.0L64.9 100.9L72.0 97.4L80.5 98.9L89.1 99.7L100.4 98.9L110.4 96.0L117.5 98.9L124.6 104.6L130.3 101.7L137.4 105.4L148.8 100.3L157.4 103.1L168.7 106.0L180.1 102.6L191.5 102.6L202.9 104.6L214.3 107.4L225.7 111.1L234.2 104.6L242.7 108.8L254.1 106.0L265.5 104.6L276.9 107.4L288.3 106.0L299.7 106.0L311.0 108.3L319.6 108.8L328.1 104.6L339.5 107.4L349.5 113.1L358.0 111.1L369.4 108.8L380.8 114.0L389.3 111.7L397.8 117.4L405.0 117.9L410.6 117.4L417.8 102.6L429.1 104.6L439.1 106.0L449.1 102.6L457.6 107.4L469.0 110.3L480.4 108.8L490.3 113.1L497.4 104.6L506.0 107.4L514.5 105.4L523.1 110.3L534.4 108.8L545.8 112.2L557.2 112.2L568.6 114.0L577.1 118.8L582.8 125.3L587.9 111.7L594.2 104.6L599.9 114.5L605.6 103.1L611.3 88.9L617.0 85.5L625.5 91.8L634.0 93.2L642.6 91.8L651.1 94.6L659.7 92.3L668.2 93.2L676.7 94.6L685.3 89.5L691.0 91.8L696.6 98.9" stroke="#e51c23" stroke-width="2.300" stroke-linejoin="round"/>
<rect x="45" y="117.500" width="340" height="20" fill="#fff" stroke="#e0e0e0"/>
<rect x="48" y="121.500" width="9" height="9" stroke="#2a2ad0" stroke-width="1.200"/><rect x="128.500" y="121.500" width="9" height="9" stroke="#d43a3a" stroke-width="1.200"/>
<path d="M208.500 126.500h11.500" stroke="#1a1ae0" stroke-width="2"/><path d="M268 126.500h11.500" stroke="#e51c23" stroke-width="2"/>
<path d="M334.500 121l4.500 8h-9z" fill="#111"/>
</svg>
<div class="ga" style="top:49px">4</div><div class="ga" style="top:59.500px">3</div><div class="ga" style="top:70px">2</div><div class="ga" style="top:80.500px">1</div><div class="ga" style="top:91px">0</div><div class="ga" style="top:101.500px">-1</div><div class="ga" style="top:112px">-2</div><div class="ga" style="top:122.500px">-3</div>
<div class="lbl" style="left:626px;top:57px;font-size:13px;color:#333">GuideNorth</div>
<div class="lbl" style="left:635px;top:128px;font-size:13px;color:#333">GuideEast</div>
<div class="lbl lg" style="left:63px">赤経修正</div><div class="lbl lg" style="left:143.500px">赤緯修正</div><div class="lbl lg" style="left:224px">赤経</div><div class="lbl lg" style="left:284px">赤緯</div><div class="lbl lg" style="left:344px"><span class="k" style="--n:5">デザリング</span></div>
<div class="ph"><span class="k" style="--n:4;transform:scaleX(.74)">ガイダー</span><svg class="x" viewBox="0 0 12 12" stroke="#c9d6e0" stroke-width="1.100"><path d="M1 1l10 10M11 1L1 11"/></svg></div></div>
<div class="panel" id="p-hist" style="left:934px;top:585px;width:141px;height:132px">
<div class="abs" style="left:1.500px;top:20px;width:2px;height:112px;background:#1d2731"></div>
<div class="abs" style="left:6px;top:20px;width:133px;height:120px;background:#262626;border:2px solid #4aa0e0;box-shadow:inset 0 0 0 1px #1b4f78"></div>
<div class="abs" style="left:50px;top:60px;width:70px;height:50px;border-radius:50%;background:radial-gradient(closest-side,rgba(255,255,255,.09),rgba(255,255,255,0))"></div>
<div class="hl" style="left:13.500px;top:25px;width:54px"><span class="w">算術平均</span></div><div class="hl" style="left:72px;top:25px;width:31px">2981</div>
<div class="hl" style="left:13.500px;top:41px;width:26px">HFR</div><div class="hl" style="left:72px;top:41px;width:27px">3.16</div>
<div class="hl" style="left:13.500px;top:57px;width:47px"><span class="k" style="--n:5">フィルター</span></div><div class="hl" style="left:72px;top:57px;width:11.500px">B</div>
<div class="hl" style="left:13.500px;top:105px;width:54px"><span class="w">継続時間</span></div><div class="hl" style="left:72px;top:105px;width:45px">300.00s</div>
<div class="hl" style="left:13.500px;top:121px;width:26px">時間</div><div class="hl" style="left:72px;top:121px;width:49px">22:48:56</div>
<div class="ph">画像履歴<svg class="x" viewBox="0 0 12 12" stroke="#c9d6e0" stroke-width="1.100"><path d="M1 1l10 10M11 1L1 11"/></svg></div></div>
</div>
</body>
</html>
